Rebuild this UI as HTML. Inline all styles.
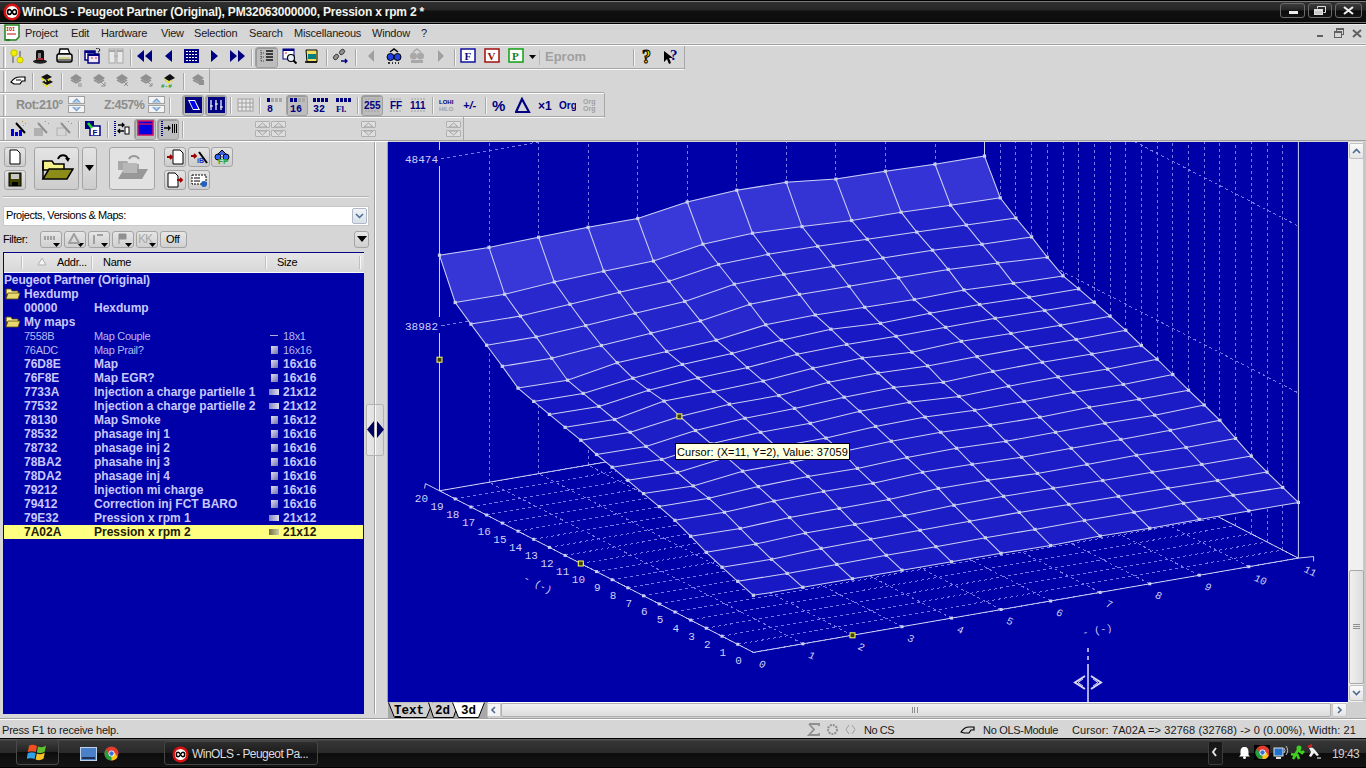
<!DOCTYPE html><html><head><meta charset="utf-8"><style>
*{margin:0;padding:0;box-sizing:border-box}
body{width:1366px;height:768px;overflow:hidden;position:relative;background:#d4d4d4;font-family:"Liberation Sans",sans-serif;font-size:11px;color:#000}
.a{position:absolute}
.t{position:absolute;white-space:nowrap;line-height:1}
.sep{position:absolute;width:2px;border-left:1px solid #a0a0a0;border-right:1px solid #fff}
.hsep{position:absolute;height:2px;border-top:1px solid #a0a0a0;border-bottom:1px solid #fff}
.btn{position:absolute;border:1px solid #a8a8a8;border-radius:2px;background:#dcdcdc}
.sel{position:absolute;border:1px solid #9a9a9a;border-radius:3px;background:#b8b8b8}
</style></head><body>
<div class="a" style="left:0;top:0;width:1366px;height:25px;background:linear-gradient(#000 0,#000 1px,#7a7a7a 1px,#7a7a7a 2px,#303030 2px,#262626 10px,#101010 11px,#0c0c0c 22px,#707070 22px,#707070 23px,#000 23px,#000 24px,#ececec 24px)"></div>
<svg class="a" style="left:3px;top:3px" width="18" height="18" viewBox="0 0 18 18"><circle cx="9" cy="9" r="8.5" fill="#d81010"/><circle cx="9" cy="9" r="6" fill="#fff"/><path d="M4.5 9c0-1.6 1-2.4 2-2.4s1.6.8 2.5 2.4 1.5 2.4 2.5 2.4 2-.8 2-2.4-1-2.4-2-2.4-1.6.8-2.5 2.4-1.5 2.4-2.5 2.4-2-.8-2-2.4z" fill="none" stroke="#000" stroke-width="1.6"/></svg>
<div class="t" style="left:22px;top:6px;font-size:12px;font-weight:bold;color:#f4f4ee;letter-spacing:-0.2px">WinOLS - Peugeot Partner (Original), PM32063000000, Pression x rpm 2 *</div>
<div class="a" style="left:1280px;top:3px;width:25px;height:15px;border:1px solid #6a6a6a;border-radius:3px;background:linear-gradient(#3c3c3c,#262626 45%,#0a0a0a 55%,#141414)"></div>
<div class="a" style="left:1308px;top:3px;width:24px;height:15px;border:1px solid #6a6a6a;border-radius:3px;background:linear-gradient(#3c3c3c,#262626 45%,#0a0a0a 55%,#141414)"></div>
<div class="a" style="left:1335px;top:3px;width:27px;height:15px;border:1px solid #6a6a6a;border-radius:3px;background:linear-gradient(#3c3c3c,#262626 45%,#0a0a0a 55%,#141414)"></div>
<div class="a" style="left:1289px;top:11px;width:9px;height:3px;background:#eee"></div>
<svg class="a" style="left:1314px;top:6px" width="12" height="9" viewBox="0 0 12 9" ><path d="M3.5 2.5V0.5h8v6h-2" fill="none" stroke="#e0e0e0"/><rect x="0" y="3" width="9" height="6" fill="#e0e0e0"/><rect x="1" y="5" width="7" height="3" fill="#c8c8c8"/></svg>
<svg class="a" style="left:1343px;top:6px" width="11" height="9"><path d="M1 1l9 7M10 1l-9 7" stroke="#eee" stroke-width="2.2"/></svg>
<div class="a" style="left:0;top:25px;width:1366px;height:20px;background:#d6d6d6;border-bottom:1px solid #a0a0a0"></div><div class="a" style="left:0;top:43px;width:1366px;height:1px;background:#e6e6e6"></div>
<div class="a" style="left:0;top:45px;width:1366px;height:1px;background:#fff"></div>
<svg class="a" style="left:3px;top:24px" width="18" height="18" viewBox="0 0 18 18"><path d="M2 1h14v12l-3 3H2z" fill="#fff" stroke="#208020" stroke-width="1.5"/><text x="3" y="7" font-size="5" font-family="Liberation Mono" font-weight="bold" fill="#c01010">IOI</text><path d="M4 10h9" stroke="#c01010"/><path d="M3 16h4" stroke="#208020" stroke-width="2"/></svg>
<div class="t" style="left:25px;top:28px;font-size:11px;letter-spacing:-0.2px;color:#1a1a1a">Project</div>
<div class="t" style="left:71px;top:28px;font-size:11px;letter-spacing:-0.2px;color:#1a1a1a">Edit</div>
<div class="t" style="left:101px;top:28px;font-size:11px;letter-spacing:-0.2px;color:#1a1a1a">Hardware</div>
<div class="t" style="left:161px;top:28px;font-size:11px;letter-spacing:-0.2px;color:#1a1a1a">View</div>
<div class="t" style="left:194px;top:28px;font-size:11px;letter-spacing:-0.2px;color:#1a1a1a">Selection</div>
<div class="t" style="left:249px;top:28px;font-size:11px;letter-spacing:-0.2px;color:#1a1a1a">Search</div>
<div class="t" style="left:294px;top:28px;font-size:11px;letter-spacing:-0.2px;color:#1a1a1a">Miscellaneous</div>
<div class="t" style="left:372px;top:28px;font-size:11px;letter-spacing:-0.2px;color:#1a1a1a">Window</div>
<div class="t" style="left:421px;top:28px;font-size:11px;letter-spacing:-0.2px;color:#1a1a1a">?</div>
<div class="a" style="left:1317px;top:35px;width:6px;height:2px;background:#606060"></div>
<div class="a" style="left:1336px;top:28px;width:8px;height:7px;border:1px solid #606060;border-top-width:2px"></div><div class="a" style="left:1334px;top:31px;width:8px;height:7px;border:1px solid #606060;border-top-width:2px;background:#d6d6d6"></div>
<svg class="a" style="left:1352px;top:29px" width="10" height="9"><path d="M1 1l8 7M9 1l-8 7" stroke="#606060" stroke-width="2"/></svg>
<div class="a" style="left:0;top:46px;width:1366px;height:95px;background:#d6d6d6"></div>
<div class="a" style="left:0;top:68px;width:684px;height:1px;background:#a8a8a8"></div><div class="a" style="left:0;top:69px;width:684px;height:1px;background:#fafafa"></div>
<div class="a" style="left:0;top:92px;width:604px;height:1px;background:#a8a8a8"></div><div class="a" style="left:0;top:93px;width:604px;height:1px;background:#fafafa"></div>
<div class="a" style="left:0;top:116px;width:604px;height:1px;background:#a8a8a8"></div><div class="a" style="left:0;top:117px;width:604px;height:1px;background:#fafafa"></div>
<div class="a" style="left:684px;top:46px;width:1px;height:23px;background:#a8a8a8"></div>
<div class="a" style="left:209px;top:69px;width:1px;height:24px;background:#a8a8a8"></div>
<div class="a" style="left:604px;top:93px;width:1px;height:24px;background:#a8a8a8"></div>
<div class="a" style="left:463px;top:117px;width:1px;height:23px;background:#a8a8a8"></div>
<div class="a" style="left:0;top:140px;width:1366px;height:1px;background:#a0a0a0"></div><div class="a" style="left:0;top:141px;width:388px;height:1px;background:#fff"></div>
<div class="a" style="left:3px;top:47px;width:1px;height:21px;background:#a8a8a8"></div><div class="a" style="left:5px;top:47px;width:1px;height:21px;background:#fff"></div>
<div class="a" style="left:3px;top:71px;width:1px;height:21px;background:#a8a8a8"></div><div class="a" style="left:5px;top:71px;width:1px;height:21px;background:#fff"></div>
<div class="a" style="left:3px;top:95px;width:1px;height:21px;background:#a8a8a8"></div><div class="a" style="left:5px;top:95px;width:1px;height:21px;background:#fff"></div>
<div class="a" style="left:3px;top:119px;width:1px;height:21px;background:#a8a8a8"></div><div class="a" style="left:5px;top:119px;width:1px;height:21px;background:#fff"></div>
<svg class="a" style="left:9px;top:48px" width="17" height="16" viewBox="0 0 17 16" ><path d="M4 2v13" stroke="#909090" stroke-width="2"/><path d="M11 3v10" stroke="#909090" stroke-width="2"/><circle cx="5" cy="5" r="3.2" fill="#f0f000" stroke="#c0c000"/><circle cx="11" cy="12" r="3" fill="#f0f000" stroke="#c0c000"/></svg>
<svg class="a" style="left:32px;top:48px" width="17" height="16" viewBox="0 0 17 16" ><ellipse cx="8" cy="13.5" rx="7" ry="2.2" fill="#202020"/><rect x="4" y="2" width="8" height="11" rx="2" fill="#101010"/><rect x="6" y="5" width="3" height="5" fill="#808080"/><path d="M5 11h6" stroke="#e03040" stroke-width="1.5"/></svg>
<svg class="a" style="left:56px;top:48px" width="17" height="16" viewBox="0 0 17 16" ><path d="M4 1h8l2 5H3z" fill="#fff" stroke="#000" stroke-width="1.3"/><rect x="1" y="6" width="15" height="8" rx="2" fill="#e8e8e8" stroke="#000" stroke-width="1.5"/><path d="M3 10h11" stroke="#c8c860" stroke-width="1.5"/><path d="M2 12h13" stroke="#000"/></svg>
<svg class="a" style="left:84px;top:48px" width="17" height="16" viewBox="0 0 17 16" ><rect x="1" y="3" width="10" height="9" fill="#fff" stroke="#000080" stroke-width="1.5"/><rect x="1" y="3" width="10" height="2" fill="#000080"/><rect x="4" y="6" width="11" height="9" fill="#f0e8f8" stroke="#000080" stroke-width="1.5"/><rect x="4" y="6" width="11" height="2" fill="#000080"/><path d="M7 10h2M11 10h2" stroke="#e03030"/><path d="M12 1a2 2 0 1 1 2 3" stroke="#000" fill="none"/></svg>
<svg class="a" style="left:108px;top:48px" width="17" height="16" viewBox="0 0 17 16" ><rect x="1" y="1" width="6" height="14" fill="#e8e8e8" stroke="#a8a8a8"/><rect x="9" y="1" width="6" height="14" fill="#e8e8e8" stroke="#a8a8a8"/><path d="M1 3h6M9 3h6" stroke="#a8a8a8" stroke-width="2"/><path d="M6 8h4" stroke="#a8a8a8"/></svg>
<svg class="a" style="left:137px;top:48px" width="17" height="16" viewBox="0 0 17 16" ><path d="M0 8l7-6v12zM8 8l7-6v12z" fill="#000080"/></svg>
<svg class="a" style="left:161px;top:48px" width="17" height="16" viewBox="0 0 17 16" ><path d="M4 8l7-6v12z" fill="#000080"/></svg>
<svg class="a" style="left:183px;top:48px" width="17" height="16" viewBox="0 0 17 16" ><rect x="1" y="1" width="15" height="14" fill="#000080"/><path d="M3 3.5h11M3 6.5h11M3 9.5h11M3 12.5h11" stroke="#fff" stroke-width="1" stroke-dasharray="2 1"/></svg>
<svg class="a" style="left:206px;top:48px" width="17" height="16" viewBox="0 0 17 16" ><path d="M12 8l-7-6v12z" fill="#000080"/></svg>
<svg class="a" style="left:229px;top:48px" width="17" height="16" viewBox="0 0 17 16" ><path d="M8 8l-7-6v12zM16 8l-7-6v12z" fill="#000080"/></svg>
<div class="a" style="left:78px;top:49px;width:1px;height:17px;background:#a8a8a8"></div><div class="a" style="left:79px;top:49px;width:1px;height:17px;background:#f4f4f4"></div>
<div class="a" style="left:130px;top:49px;width:1px;height:17px;background:#a8a8a8"></div><div class="a" style="left:131px;top:49px;width:1px;height:17px;background:#f4f4f4"></div>
<div class="a" style="left:251px;top:49px;width:1px;height:17px;background:#a8a8a8"></div><div class="a" style="left:252px;top:49px;width:1px;height:17px;background:#f4f4f4"></div>
<div class="a" style="left:326px;top:49px;width:1px;height:17px;background:#a8a8a8"></div><div class="a" style="left:327px;top:49px;width:1px;height:17px;background:#f4f4f4"></div>
<div class="a" style="left:355px;top:49px;width:1px;height:17px;background:#a8a8a8"></div><div class="a" style="left:356px;top:49px;width:1px;height:17px;background:#f4f4f4"></div>
<div class="a" style="left:454px;top:49px;width:1px;height:17px;background:#a8a8a8"></div><div class="a" style="left:455px;top:49px;width:1px;height:17px;background:#f4f4f4"></div>
<div class="a" style="left:633px;top:49px;width:1px;height:17px;background:#a8a8a8"></div><div class="a" style="left:634px;top:49px;width:1px;height:17px;background:#f4f4f4"></div>
<div class="a" style="left:255px;top:47px;width:23px;height:21px;border:1px solid #a0a0a0;border-radius:3px;background:#bdbdbd;box-shadow:inset 1px 1px 0 #999"></div>
<svg class="a" style="left:258px;top:48px" width="17" height="16" viewBox="0 0 17 16" ><path d="M3 2v11M3 5h3M3 9h3M3 13h3" stroke="#404040" stroke-dasharray="1 1"/><path d="M8 3h7M8 6h7M8 9h7M8 12h7" stroke="#101010" stroke-width="1.5"/></svg>
<svg class="a" style="left:282px;top:48px" width="17" height="16" viewBox="0 0 17 16" ><rect x="1" y="1" width="11" height="10" fill="#fff" stroke="#000080"/><rect x="1" y="1" width="11" height="2" fill="#000080"/><path d="M3 5h2" stroke="#e03030"/><circle cx="9" cy="10" r="3.5" fill="#e8f0ff" stroke="#000" stroke-width="1.2"/><path d="M11.5 12.5l3 3" stroke="#000" stroke-width="2"/></svg>
<svg class="a" style="left:304px;top:48px" width="17" height="16" viewBox="0 0 17 16" ><path d="M2 2h11v12H3z" fill="#f0e060" stroke="#000"/><rect x="4" y="6" width="8" height="5" fill="#008080"/><path d="M1 14h12" stroke="#000" stroke-width="1.5"/></svg>
<svg class="a" style="left:332px;top:48px" width="17" height="16" viewBox="0 0 17 16" ><ellipse cx="4" cy="9" rx="2.2" ry="3" fill="#909090" stroke="#000" stroke-width=".6" transform="rotate(40 4 9)"/><ellipse cx="10" cy="4" rx="2.2" ry="3" fill="#909090" stroke="#000" stroke-width=".6" transform="rotate(40 10 4)"/><path d="M9 13h6M13 11l2 2-2 2" stroke="#000080" fill="none" stroke-width="1.3"/></svg>
<svg class="a" style="left:364px;top:48px" width="17" height="16" viewBox="0 0 17 16" ><path d="M4 8l6-6v12z" fill="#a0a0a0"/></svg>
<svg class="a" style="left:386px;top:48px" width="17" height="16" viewBox="0 0 17 16" ><circle cx="4.5" cy="9" r="3.5" fill="#2040e0" stroke="#000"/><circle cx="11.5" cy="9" r="3.5" fill="#2040e0" stroke="#000"/><path d="M4 4l4-3 4 3" stroke="#000" fill="none" stroke-width="1.5"/><path d="M2 15h2M6 15h1M9 15h1M12 15h1" stroke="#000" stroke-width="1.5"/></svg>
<svg class="a" style="left:409px;top:48px" width="17" height="16" viewBox="0 0 17 16" ><circle cx="4.5" cy="8" r="3.5" fill="#a8a8a8"/><circle cx="11.5" cy="8" r="3.5" fill="#a8a8a8"/><path d="M4 4l4-3 4 3" stroke="#a8a8a8" fill="none" stroke-width="1.5"/><rect x="2" y="12" width="12" height="3" fill="#a8a8a8"/></svg>
<svg class="a" style="left:432px;top:48px" width="17" height="16" viewBox="0 0 17 16" ><path d="M12 8l-6-6v12z" fill="#a0a0a0"/></svg>
<svg class="a" style="left:460px;top:48px" width="17" height="16" viewBox="0 0 17 16" ><rect x="1" y="1" width="14" height="13" fill="#fff" stroke="#1010a0" stroke-width="1.5"/><text x="4.5" y="12" font-size="11" font-weight="bold" font-family="Liberation Serif" fill="#101080">F</text></svg>
<svg class="a" style="left:484px;top:48px" width="17" height="16" viewBox="0 0 17 16" ><rect x="1" y="1" width="14" height="13" fill="#fff" stroke="#a01010" stroke-width="1.5"/><text x="3.5" y="12" font-size="11" font-weight="bold" font-family="Liberation Serif" fill="#901010">V</text></svg>
<svg class="a" style="left:508px;top:48px" width="17" height="16" viewBox="0 0 17 16" ><rect x="1" y="1" width="14" height="13" fill="#fff" stroke="#10a010" stroke-width="1.5"/><text x="4" y="12" font-size="11" font-weight="bold" font-family="Liberation Serif" fill="#108010">P</text></svg>
<svg class="a" style="left:640px;top:48px" width="17" height="16" viewBox="0 0 17 16" ><text x="2" y="15" font-size="18" font-weight="bold" font-family="Liberation Serif" fill="#f8e800" stroke="#000" stroke-width="1">?</text></svg>
<svg class="a" style="left:663px;top:48px" width="17" height="16" viewBox="0 0 17 16" ><path d="M1 3v11l3-3 2 5 2-1-2-5h4z" fill="#000"/><text x="7" y="12" font-size="15" font-weight="bold" font-family="Liberation Serif" fill="#000080">?</text></svg>
<svg class="a" style="left:529px;top:55px" width="7" height="4"><path d="M0 0h7L3.5 4z" fill="#000"/></svg>
<div class="t" style="left:545px;top:50px;font-size:13px;font-weight:bold;color:#a0a0a0">Eprom</div>
<div class="a" style="left:539px;top:50px;width:1px;height:15px;background:#b8b8b8"></div>
<svg class="a" style="left:10px;top:72px" width="17" height="16" viewBox="0 0 17 16" ><path d="M1 10c2-3 5-5 9-5h5v4h-3l-2 3H4z" fill="#fff" stroke="#000" stroke-width="1.2"/><path d="M6 8h5" stroke="#000"/></svg>
<svg class="a" style="left:39px;top:72px" width="17" height="16" viewBox="0 0 17 16" ><path d="M2 5l6-3 5 3-6 3z" fill="#101010"/><path d="M3 10l6-3 5 3-6 3z" fill="#101010"/><path d="M3 6l1 2M6 8l1 2M9 7l1 2M4 11l1 3M7 13l1 2M10 12l1 2" stroke="#e8e000" stroke-width="1.5"/></svg>
<svg class="a" style="left:68px;top:72px" width="17" height="16" viewBox="0 0 17 16" ><path d="M2 6l6-4 6 4-6 4z" fill="#909090"/><path d="M3 8l5 3 5-3" stroke="#909090" fill="none" stroke-width="1.5"/><path d="M10 12h4M10 14h4" stroke="#909090"/></svg>
<svg class="a" style="left:91px;top:72px" width="17" height="16" viewBox="0 0 17 16" ><path d="M2 6l6-4 6 4-6 4z" fill="#909090"/><path d="M3 8l5 3 5-3" stroke="#909090" fill="none" stroke-width="1.5"/><path d="M9 9l5 5M14 10v4h-4" stroke="#909090" fill="none"/></svg>
<svg class="a" style="left:114px;top:72px" width="17" height="16" viewBox="0 0 17 16" ><path d="M2 6l6-4 6 4-6 4z" fill="#909090"/><path d="M3 8l5 3 5-3" stroke="#909090" fill="none" stroke-width="1.5"/><path d="M10 10l4 4M14 10l-4 4" stroke="#909090"/></svg>
<svg class="a" style="left:138px;top:72px" width="17" height="16" viewBox="0 0 17 16" ><path d="M2 6l6-4 6 4-6 4z" fill="#909090"/><path d="M3 8l5 3 5-3" stroke="#909090" fill="none" stroke-width="1.5"/><path d="M9 9l5 5M14 11v3h-3" stroke="#909090" fill="none"/></svg>
<svg class="a" style="left:161px;top:72px" width="17" height="16" viewBox="0 0 17 16" ><path d="M3 6l6-4 5 4-6 3z" fill="#101010"/><path d="M4 7l1 3M7 9l1 2M10 8l1 2" stroke="#e8e000" stroke-width="1.5"/><text x="0" y="16" font-size="6" font-weight="bold" font-family="Liberation Mono" fill="#10a010">#-#</text></svg>
<svg class="a" style="left:190px;top:72px" width="17" height="16" viewBox="0 0 17 16" ><path d="M2 6l6-4 6 4-6 4z" fill="#909090"/><path d="M3 8l5 3 5-3" stroke="#909090" fill="none" stroke-width="1.5"/><rect x="9" y="8" width="5" height="5" fill="#909090"/></svg>
<div class="a" style="left:32px;top:73px;width:1px;height:17px;background:#a8a8a8"></div><div class="a" style="left:33px;top:73px;width:1px;height:17px;background:#f4f4f4"></div>
<div class="a" style="left:61px;top:73px;width:1px;height:17px;background:#a8a8a8"></div><div class="a" style="left:62px;top:73px;width:1px;height:17px;background:#f4f4f4"></div>
<div class="a" style="left:183px;top:73px;width:1px;height:17px;background:#a8a8a8"></div><div class="a" style="left:184px;top:73px;width:1px;height:17px;background:#f4f4f4"></div>
<div class="t" style="left:16px;top:99px;font-size:12.5px;font-weight:bold;color:#8c8c8c;letter-spacing:-0.5px">Rot:210°</div>
<div class="t" style="left:104px;top:99px;font-size:12.5px;font-weight:bold;color:#8c8c8c;letter-spacing:-0.6px">Z:457%</div>
<div class="a" style="left:68px;top:96px;width:17px;height:8px;border:1px solid #a0a0a0;background:#f4f4f4"></div>
<div class="a" style="left:68px;top:105px;width:17px;height:8px;border:1px solid #a0a0a0;background:#f4f4f4"></div>
<svg class="a" style="left:72px;top:98px" width="9" height="5" viewBox="0 0 9 5" ><path d="M0 4.5L4.5 0 9 4.5z" fill="#7aa4d0"/><path d="M2 4.5L4.5 2 7 4.5z" fill="#b8d4f0"/></svg>
<svg class="a" style="left:72px;top:107px" width="9" height="5" viewBox="0 0 9 5" ><path d="M0 0L4.5 4.5 9 0z" fill="#7aa4d0"/><path d="M2 0L4.5 2.5 7 0z" fill="#b8d4f0"/></svg>
<div class="a" style="left:148px;top:96px;width:17px;height:8px;border:1px solid #a0a0a0;background:#f4f4f4"></div>
<div class="a" style="left:148px;top:105px;width:17px;height:8px;border:1px solid #a0a0a0;background:#f4f4f4"></div>
<svg class="a" style="left:152px;top:98px" width="9" height="5" viewBox="0 0 9 5" ><path d="M0 4.5L4.5 0 9 4.5z" fill="#7aa4d0"/><path d="M2 4.5L4.5 2 7 4.5z" fill="#b8d4f0"/></svg>
<svg class="a" style="left:152px;top:107px" width="9" height="5" viewBox="0 0 9 5" ><path d="M0 0L4.5 4.5 9 0z" fill="#7aa4d0"/><path d="M2 0L4.5 2.5 7 0z" fill="#b8d4f0"/></svg>
<div class="a" style="left:169px;top:97px;width:1px;height:17px;background:#a8a8a8"></div><div class="a" style="left:170px;top:97px;width:1px;height:17px;background:#f4f4f4"></div>
<div class="a" style="left:182px;top:95px;width:22px;height:21px;border:1px solid #a0a0a0;border-radius:3px;background:#bdbdbd;box-shadow:inset 1px 1px 0 #999"></div>
<div class="a" style="left:205px;top:95px;width:22px;height:21px;border:1px solid #a0a0a0;border-radius:3px;background:#bdbdbd;box-shadow:inset 1px 1px 0 #999"></div>
<svg class="a" style="left:185px;top:97px" width="17" height="16" viewBox="0 0 17 16" ><rect x="0" y="0" width="17" height="16" fill="#000080"/><path d="M3 3h7l5 10H8z" fill="#fff"/><path d="M4.5 4h5l3.8 8H8.3z" fill="#0000f0"/></svg>
<svg class="a" style="left:208px;top:97px" width="17" height="16" viewBox="0 0 17 16" ><rect x="0" y="0" width="17" height="16" fill="#000080"/><path d="M3 3v10M8 3v10M13 3v10" stroke="#fff" stroke-width="1.2"/><path d="M2 9h3M7 7h3M12 10h3" stroke="#fff"/></svg>
<div class="a" style="left:230px;top:97px;width:1px;height:17px;background:#a8a8a8"></div><div class="a" style="left:231px;top:97px;width:1px;height:17px;background:#f4f4f4"></div>
<svg class="a" style="left:237px;top:97px" width="17" height="16" viewBox="0 0 17 16" ><rect x="1" y="2" width="15" height="12" fill="#e8e8e8" stroke="#a0a0a0"/><path d="M1 6h15M1 10h15M5 2v12M9 2v12M13 2v12" stroke="#a0a0a0"/></svg>
<div class="a" style="left:259px;top:97px;width:1px;height:17px;background:#a8a8a8"></div><div class="a" style="left:260px;top:97px;width:1px;height:17px;background:#f4f4f4"></div>
<svg class="a" style="left:266px;top:97px" width="17" height="16" viewBox="0 0 17 16" ><rect x="1" y="1" width="3" height="4" fill="#000080"/><rect x="5" y="1" width="3" height="4" fill="#a8a8a8"/><rect x="9" y="1" width="3" height="4" fill="#a8a8a8"/><rect x="13" y="1" width="3" height="4" fill="#a8a8a8"/><text x="1" y="15" font-size="10" font-weight="bold" font-family="Liberation Mono" fill="#000080">8</text></svg>
<div class="a" style="left:286px;top:95px;width:22px;height:21px;border:1px solid #a0a0a0;border-radius:3px;background:#bdbdbd;box-shadow:inset 1px 1px 0 #999"></div>
<svg class="a" style="left:289px;top:97px" width="17" height="16" viewBox="0 0 17 16" ><rect x="1" y="1" width="3" height="4" fill="#000080"/><rect x="5" y="1" width="3" height="4" fill="#000080"/><rect x="9" y="1" width="3" height="4" fill="#a8a8a8"/><rect x="13" y="1" width="3" height="4" fill="#a8a8a8"/><text x="1" y="15" font-size="10" font-weight="bold" font-family="Liberation Mono" fill="#000080">16</text></svg>
<svg class="a" style="left:312px;top:97px" width="17" height="16" viewBox="0 0 17 16" ><rect x="1" y="1" width="15" height="4" fill="#000080"/><path d="M4.5 1v4M8.5 1v4M12.5 1v4" stroke="#d4d4d4"/><text x="1" y="15" font-size="10" font-weight="bold" font-family="Liberation Mono" fill="#000080">32</text></svg>
<svg class="a" style="left:335px;top:97px" width="17" height="16" viewBox="0 0 17 16" ><rect x="1" y="1" width="15" height="4" fill="#000080"/><path d="M4.5 1v4M8.5 1v4M12.5 1v4" stroke="#d4d4d4"/><text x="1" y="15" font-size="9" font-weight="bold" font-family="Liberation Serif" fill="#000080">Fl.</text></svg>
<div class="a" style="left:357px;top:97px;width:1px;height:17px;background:#a8a8a8"></div><div class="a" style="left:358px;top:97px;width:1px;height:17px;background:#f4f4f4"></div>
<div class="a" style="left:361px;top:95px;width:22px;height:21px;border:1px solid #a0a0a0;border-radius:3px;background:#bdbdbd;box-shadow:inset 1px 1px 0 #999"></div>
<svg class="a" style="left:364px;top:97px" width="17" height="16" viewBox="0 0 17 16" ><text x="0" y="12" font-size="10" font-weight="bold" font-family="Liberation Sans" fill="#000080">255</text><path d="M1 2h14M1 14h14" stroke="#a0a0a0" stroke-dasharray="2 1"/></svg>
<svg class="a" style="left:389px;top:97px" width="17" height="16" viewBox="0 0 17 16" ><text x="1" y="12" font-size="10" font-weight="bold" font-family="Liberation Sans" fill="#000080">FF</text><path d="M1 2h11M1 14h11" stroke="#a0a0a0" stroke-dasharray="2 1"/></svg>
<svg class="a" style="left:410px;top:97px" width="17" height="16" viewBox="0 0 17 16" ><text x="0" y="12" font-size="10" font-weight="bold" font-family="Liberation Sans" fill="#000080">111</text><path d="M1 2h14M1 14h14" stroke="#a0a0a0" stroke-dasharray="2 1"/></svg>
<div class="a" style="left:432px;top:97px;width:1px;height:17px;background:#a8a8a8"></div><div class="a" style="left:433px;top:97px;width:1px;height:17px;background:#f4f4f4"></div>
<svg class="a" style="left:439px;top:97px" width="17" height="16" viewBox="0 0 17 16" ><text x="0" y="7" font-size="6" font-weight="bold" font-family="Liberation Sans" fill="#000080">LOHI</text><text x="0" y="14" font-size="6" font-weight="bold" font-family="Liberation Sans" fill="#a0a0a0">HILO</text></svg>
<svg class="a" style="left:463px;top:97px" width="17" height="16" viewBox="0 0 17 16" ><text x="0" y="12" font-size="11" font-weight="bold" font-style="italic" font-family="Liberation Sans" fill="#000080">+/-</text></svg>
<div class="a" style="left:485px;top:97px;width:1px;height:17px;background:#a8a8a8"></div><div class="a" style="left:486px;top:97px;width:1px;height:17px;background:#f4f4f4"></div>
<svg class="a" style="left:491px;top:97px" width="17" height="16" viewBox="0 0 17 16" ><text x="1" y="14" font-size="15" font-weight="bold" font-family="Liberation Sans" fill="#000080">%</text></svg>
<svg class="a" style="left:515px;top:97px" width="17" height="16" viewBox="0 0 17 16" ><path d="M7 2L1 15h13z" fill="none" stroke="#000080" stroke-width="2.2"/></svg>
<svg class="a" style="left:538px;top:97px" width="17" height="16" viewBox="0 0 17 16" ><text x="0" y="13" font-size="12" font-weight="bold" font-family="Liberation Sans" fill="#000080">×1</text></svg>
<svg class="a" style="left:559px;top:97px" width="17" height="16" viewBox="0 0 17 16" ><text x="0" y="12" font-size="10" font-weight="bold" font-family="Liberation Sans" fill="#000080">Org</text></svg>
<svg class="a" style="left:583px;top:97px" width="17" height="16" viewBox="0 0 17 16" ><text x="0" y="7" font-size="7" font-weight="bold" font-family="Liberation Sans" fill="#a0a0a0">Org</text><text x="0" y="14" font-size="7" font-weight="bold" font-family="Liberation Sans" fill="#a0a0a0">Org</text></svg>
<svg class="a" style="left:10px;top:120px" width="17" height="16" viewBox="0 0 17 16" ><rect x="1" y="9" width="3" height="7" fill="#0000e0"/><rect x="5" y="12" width="3" height="4" fill="#0000e0"/><rect x="9" y="10" width="3" height="6" fill="#0000e0"/><path d="M6 3l9 10" stroke="#000" stroke-width="2"/><path d="M12 1l1 1M15 3l1 1M13 5l1 1" stroke="#c0a000"/></svg>
<svg class="a" style="left:33px;top:120px" width="17" height="16" viewBox="0 0 17 16" ><rect x="1" y="8" width="9" height="8" fill="#b0b0b0"/><path d="M5 3l9 10" stroke="#909090" stroke-width="2"/><path d="M12 1l1 1M15 3l1 1" stroke="#909090"/></svg>
<svg class="a" style="left:56px;top:120px" width="17" height="16" viewBox="0 0 17 16" ><rect x="1" y="8" width="9" height="8" fill="none" stroke="#b0b0b0"/><path d="M5 3l9 10" stroke="#909090" stroke-width="2"/><path d="M12 1l1 1M15 3l1 1" stroke="#909090"/></svg>
<div class="a" style="left:78px;top:121px;width:1px;height:17px;background:#a8a8a8"></div><div class="a" style="left:79px;top:121px;width:1px;height:17px;background:#f4f4f4"></div>
<svg class="a" style="left:84px;top:120px" width="17" height="16" viewBox="0 0 17 16" ><rect x="1" y="1" width="9" height="8" fill="#000080"/><rect x="6" y="6" width="10" height="10" fill="#fff" stroke="#000080" stroke-width="1.5"/><text x="8.5" y="15" font-size="8" font-weight="bold" fill="#000080">F</text><path d="M4 3l4 5" stroke="#20e020" stroke-width="2.5"/></svg>
<div class="a" style="left:107px;top:121px;width:1px;height:17px;background:#a8a8a8"></div><div class="a" style="left:108px;top:121px;width:1px;height:17px;background:#f4f4f4"></div>
<svg class="a" style="left:113px;top:120px" width="17" height="16" viewBox="0 0 17 16" ><path d="M2 1v15" stroke="#000080" stroke-dasharray="1 1" stroke-width="2"/><path d="M5 5h6M9 3l2 2-2 2M5 11h6M7 9l-2 2 2 2" stroke="#000" fill="none" stroke-width="1.3"/><rect x="12" y="7" width="4" height="7" fill="#fff" stroke="#000"/></svg>
<div class="a" style="left:134px;top:119px;width:22px;height:21px;border:1px solid #a0a0a0;border-radius:3px;background:#bdbdbd;box-shadow:inset 1px 1px 0 #999"></div>
<div class="a" style="left:157px;top:119px;width:22px;height:21px;border:1px solid #a0a0a0;border-radius:3px;background:#bdbdbd;box-shadow:inset 1px 1px 0 #999"></div>
<svg class="a" style="left:137px;top:120px" width="17" height="16" viewBox="0 0 17 16" ><rect x="1" y="1" width="15" height="14" fill="#0000e0" stroke="#d01060" stroke-width="1.5"/><path d="M1 4h15" stroke="#d01060" stroke-width="1.5"/></svg>
<svg class="a" style="left:160px;top:120px" width="17" height="16" viewBox="0 0 17 16" ><path d="M2 1v15" stroke="#000080" stroke-dasharray="1 1" stroke-width="2"/><path d="M4 8h5" stroke="#000" stroke-width="1.5"/><path d="M8 5l3 3-3 3z" fill="#000"/><path d="M12.5 4v9M14.5 4v9M16.5 4v9" stroke="#000"/></svg>
<div class="a" style="left:182px;top:121px;width:1px;height:17px;background:#a8a8a8"></div><div class="a" style="left:183px;top:121px;width:1px;height:17px;background:#f4f4f4"></div>
<div class="a" style="left:255px;top:121px;width:15px;height:7px;border:1px solid #b0b0b0;border-radius:1px;background:#dedede"></div>
<div class="a" style="left:255px;top:130px;width:15px;height:7px;border:1px solid #b0b0b0;border-radius:1px;background:#dedede"></div>
<svg class="a" style="left:258px;top:122px" width="9" height="5" viewBox="0 0 9 5" ><path d="M0 5L4.5 1 9 5z" fill="none" stroke="#a0a0a0"/></svg>
<svg class="a" style="left:258px;top:131px" width="9" height="5" viewBox="0 0 9 5" ><path d="M0 0L4.5 4 9 0z" fill="none" stroke="#a0a0a0"/></svg>
<div class="a" style="left:271px;top:121px;width:15px;height:7px;border:1px solid #b0b0b0;border-radius:1px;background:#dedede"></div>
<div class="a" style="left:271px;top:130px;width:15px;height:7px;border:1px solid #b0b0b0;border-radius:1px;background:#dedede"></div>
<svg class="a" style="left:274px;top:122px" width="9" height="5" viewBox="0 0 9 5" ><path d="M0 5L4.5 1 9 5z" fill="none" stroke="#a0a0a0"/></svg>
<svg class="a" style="left:274px;top:131px" width="9" height="5" viewBox="0 0 9 5" ><path d="M0 0L4.5 4 9 0z" fill="none" stroke="#a0a0a0"/></svg>
<div class="a" style="left:361px;top:121px;width:15px;height:7px;border:1px solid #b0b0b0;border-radius:1px;background:#dedede"></div>
<div class="a" style="left:361px;top:130px;width:15px;height:7px;border:1px solid #b0b0b0;border-radius:1px;background:#dedede"></div>
<svg class="a" style="left:364px;top:122px" width="9" height="5" viewBox="0 0 9 5" ><path d="M0 5L4.5 1 9 5z" fill="none" stroke="#a0a0a0"/></svg>
<svg class="a" style="left:364px;top:131px" width="9" height="5" viewBox="0 0 9 5" ><path d="M0 0L4.5 4 9 0z" fill="none" stroke="#a0a0a0"/></svg>
<div class="a" style="left:446px;top:121px;width:15px;height:7px;border:1px solid #b0b0b0;border-radius:1px;background:#dedede"></div>
<div class="a" style="left:446px;top:130px;width:15px;height:7px;border:1px solid #b0b0b0;border-radius:1px;background:#dedede"></div>
<svg class="a" style="left:449px;top:122px" width="9" height="5" viewBox="0 0 9 5" ><path d="M0 5L4.5 1 9 5z" fill="none" stroke="#a0a0a0"/></svg>
<svg class="a" style="left:449px;top:131px" width="9" height="5" viewBox="0 0 9 5" ><path d="M0 0L4.5 4 9 0z" fill="none" stroke="#a0a0a0"/></svg>
<div class="a" style="left:0;top:142px;width:388px;height:576px;background:#d6d6d6"></div>
<div class="a" style="left:4px;top:147px;width:22px;height:20px;border:1px solid #a4a4a4;border-radius:3px;background:linear-gradient(#e4e4e4,#cdcdcd)"></div>
<div class="a" style="left:4px;top:170px;width:22px;height:20px;border:1px solid #a4a4a4;border-radius:3px;background:linear-gradient(#e4e4e4,#cdcdcd)"></div>
<div class="a" style="left:34px;top:147px;width:45px;height:43px;border:1px solid #a4a4a4;border-radius:3px;background:linear-gradient(#e4e4e4,#cdcdcd)"></div>
<div class="a" style="left:82px;top:147px;width:15px;height:43px;border:1px solid #a4a4a4;border-radius:3px;background:linear-gradient(#e4e4e4,#cdcdcd)"></div>
<div class="a" style="left:109px;top:147px;width:46px;height:43px;border:1px solid #a4a4a4;border-radius:3px;background:#e2e2e2"></div>
<div class="a" style="left:164px;top:147px;width:22px;height:20px;border:1px solid #a4a4a4;border-radius:3px;background:linear-gradient(#e4e4e4,#cdcdcd)"></div>
<div class="a" style="left:188px;top:147px;width:22px;height:20px;border:1px solid #a4a4a4;border-radius:3px;background:linear-gradient(#e4e4e4,#cdcdcd)"></div>
<div class="a" style="left:211px;top:147px;width:22px;height:20px;border:1px solid #a4a4a4;border-radius:3px;background:linear-gradient(#e4e4e4,#cdcdcd)"></div>
<div class="a" style="left:164px;top:170px;width:22px;height:20px;border:1px solid #a4a4a4;border-radius:3px;background:linear-gradient(#e4e4e4,#cdcdcd)"></div>
<div class="a" style="left:188px;top:170px;width:22px;height:20px;border:1px solid #a4a4a4;border-radius:3px;background:linear-gradient(#e4e4e4,#cdcdcd)"></div>
<svg class="a" style="left:8px;top:149px" width="14" height="16" viewBox="0 0 14 16" ><path d="M2 1h7l3 3v11H2z" fill="#fff" stroke="#000"/></svg>
<svg class="a" style="left:8px;top:172px" width="14" height="16" viewBox="0 0 14 16" ><rect x="1" y="1" width="12" height="13" fill="#404000" stroke="#000"/><rect x="3" y="2" width="8" height="5" fill="#c8c8c8"/><rect x="4" y="10" width="6" height="4" fill="#000"/></svg>
<svg class="a" style="left:40px;top:153px" width="34" height="32" viewBox="0 0 34 32" ><path d="M3 8h9l2 3h10v6H3z" fill="#f4f08c" stroke="#000" stroke-width="1.5"/><path d="M3 26l6-10h24l-6 10z" fill="#8c8c18" stroke="#000" stroke-width="1.5"/><path d="M3 8v18" stroke="#000" stroke-width="1.5"/><path d="M18 6c2-5 8-5 10 0" fill="none" stroke="#000" stroke-width="2"/><path d="M25 5h5l-2 4z" fill="#000"/></svg>
<svg class="a" style="left:85px;top:165px" width="9" height="6" viewBox="0 0 9 6" ><path d="M0 0h9L4.5 6z" fill="#000"/></svg>
<svg class="a" style="left:115px;top:153px" width="34" height="30" viewBox="0 0 34 30" ><path d="M3 8h9l2 3h10v6H3z" fill="#a8a8a8"/><path d="M3 26l6-10h24l-6 10z" fill="#989898"/><rect x="8" y="10" width="14" height="10" fill="#b8b8b8"/><path d="M14 6c2-4 8-4 10 0" fill="none" stroke="#989898" stroke-width="2"/></svg>
<svg class="a" style="left:167px;top:149px" width="17" height="16" viewBox="0 0 17 16" ><path d="M6 1h7l3 3v11H6z" fill="#fff" stroke="#000"/><path d="M0 8h5M3 6l2 2-2 2" stroke="#a00000" stroke-width="1.8" fill="none"/></svg>
<svg class="a" style="left:191px;top:149px" width="17" height="16" viewBox="0 0 17 16" ><path d="M0 7h5M3 5l2 2-2 2" stroke="#a00000" stroke-width="1.8" fill="none"/><path d="M8 3l8 11" stroke="#000" stroke-width="2"/><text x="6" y="14" font-size="7" fill="#2030c0" font-weight="bold">iB</text></svg>
<svg class="a" style="left:214px;top:149px" width="17" height="16" viewBox="0 0 17 16" ><path d="M3 6l5-5 5 5" fill="#4060e0" stroke="#000"/><circle cx="4" cy="8" r="3" fill="#3060ff" stroke="#000"/><circle cx="12" cy="8" r="3" fill="#3060ff" stroke="#000"/><text x="4" y="15" font-size="8" font-weight="bold" fill="#20b020">FP</text></svg>
<svg class="a" style="left:167px;top:172px" width="17" height="16" viewBox="0 0 17 16" ><path d="M1 1h7l3 3v11H1z" fill="#fff" stroke="#000"/><path d="M10 8h5M13 6l2 2-2 2" stroke="#a00000" stroke-width="1.8" fill="none"/></svg>
<svg class="a" style="left:191px;top:172px" width="17" height="16" viewBox="0 0 17 16" ><rect x="1" y="3" width="14" height="9" fill="#fff" stroke="#000" stroke-dasharray="2 1"/><path d="M3 6h6M3 9h6" stroke="#000"/><circle cx="13" cy="12" r="3" fill="#2060c0"/></svg>
<div class="a" style="left:3px;top:196px;width:366px;height:1px;background:#b4b4b4"></div><div class="a" style="left:3px;top:197px;width:366px;height:1px;background:#f4f4f4"></div>
<div class="a" style="left:3px;top:206px;width:366px;height:20px;background:#fff;border:1px solid #c8c8c8"></div>
<div class="t" style="left:6px;top:210px;font-size:11px;letter-spacing:-0.45px;color:#000">Projects, Versions &amp; Maps:</div>
<div class="a" style="left:352px;top:208px;width:15px;height:16px;border:1px solid #b0b8c8;border-radius:2px;background:linear-gradient(#f0f4f8,#d8e0e8)"></div>
<svg class="a" style="left:355px;top:213px" width="9" height="6" viewBox="0 0 9 6" ><path d="M1 1l3.5 3.5L8 1" fill="none" stroke="#4a6a90" stroke-width="1.5"/></svg>
<div class="t" style="left:3px;top:234px;font-size:11px;letter-spacing:-0.4px;color:#000">Filter:</div>
<div class="a" style="left:40px;top:231px;width:22px;height:17px;border:1px solid #a4a4a4;border-radius:3px;background:linear-gradient(#e6e6e6,#d0d0d0)"></div>
<svg class="a" style="left:53px;top:243px" width="7" height="4" viewBox="0 0 7 4" ><path d="M0 0h7L3.5 4z" fill="#000"/></svg>
<div class="a" style="left:64px;top:231px;width:22px;height:17px;border:1px solid #a4a4a4;border-radius:3px;background:linear-gradient(#e6e6e6,#d0d0d0)"></div>
<svg class="a" style="left:77px;top:243px" width="7" height="4" viewBox="0 0 7 4" ><path d="M0 0h7L3.5 4z" fill="#000"/></svg>
<div class="a" style="left:88px;top:231px;width:22px;height:17px;border:1px solid #a4a4a4;border-radius:3px;background:linear-gradient(#e6e6e6,#d0d0d0)"></div>
<svg class="a" style="left:101px;top:243px" width="7" height="4" viewBox="0 0 7 4" ><path d="M0 0h7L3.5 4z" fill="#000"/></svg>
<div class="a" style="left:112px;top:231px;width:22px;height:17px;border:1px solid #a4a4a4;border-radius:3px;background:linear-gradient(#e6e6e6,#d0d0d0)"></div>
<svg class="a" style="left:125px;top:243px" width="7" height="4" viewBox="0 0 7 4" ><path d="M0 0h7L3.5 4z" fill="#000"/></svg>
<div class="a" style="left:136px;top:231px;width:22px;height:17px;border:1px solid #a4a4a4;border-radius:3px;background:linear-gradient(#e6e6e6,#d0d0d0)"></div>
<svg class="a" style="left:149px;top:243px" width="7" height="4" viewBox="0 0 7 4" ><path d="M0 0h7L3.5 4z" fill="#000"/></svg>
<svg class="a" style="left:44px;top:234px" width="12" height="8" viewBox="0 0 12 8" ><path d="M0 4h11" stroke="#a0a0a0" stroke-width="4" stroke-dasharray="2 1"/></svg>
<svg class="a" style="left:68px;top:233px" width="12" height="11" viewBox="0 0 12 11" ><path d="M6 1L1 10h10z" fill="none" stroke="#a0a0a0" stroke-width="2"/></svg>
<svg class="a" style="left:92px;top:233px" width="12" height="11" viewBox="0 0 12 11" ><path d="M2 2v9M5 2h6" stroke="#a0a0a0" stroke-width="2"/></svg>
<svg class="a" style="left:116px;top:233px" width="12" height="11" viewBox="0 0 12 11" ><path d="M3 1v10M3 1h7v5H3" fill="#909090" stroke="#909090"/></svg>
<div class="t" style="left:138px;top:233px;font-size:12px;color:#a8a8a8;letter-spacing:-1px">KK</div>
<div class="a" style="left:160px;top:231px;width:27px;height:17px;border:1px solid #a4a4a4;border-radius:3px;background:linear-gradient(#e6e6e6,#d0d0d0)"></div>
<div class="t" style="left:166px;top:234px;font-size:11px;color:#000;letter-spacing:-0.3px">Off</div>
<div class="a" style="left:354px;top:231px;width:15px;height:17px;border:1px solid #a4a4a4;border-radius:3px;background:linear-gradient(#e6e6e6,#d0d0d0)"></div>
<svg class="a" style="left:357px;top:236px" width="10" height="6" viewBox="0 0 10 6" ><path d="M0 0h10L5 6z" fill="#000"/></svg>
<div class="a" style="left:374px;top:142px;width:1px;height:576px;background:#a0a0a0"></div><div class="a" style="left:375px;top:142px;width:1px;height:576px;background:#fff"></div>
<div class="a" style="left:387px;top:142px;width:1px;height:560px;background:#a0a0a0"></div>
<div class="a" style="left:366px;top:404px;width:18px;height:52px;border:1px solid #b4b4b4;border-radius:2px;background:linear-gradient(90deg,#e8e8e8,#d8d8d8)"></div>
<div class="a" style="left:374px;top:405px;width:1px;height:50px;background:#b0b0b0"></div><div class="a" style="left:375px;top:405px;width:1px;height:50px;background:#fff"></div>
<svg class="a" style="left:367px;top:421px" width="17" height="17" viewBox="0 0 17 17" ><path d="M7 0v17L0 8.5zM10 0v17l7-8.5z" fill="#000060"/></svg>
<div class="a" style="left:3px;top:252px;width:361px;height:462px;background:#0000a8;border-top:1px solid #000080"></div>
<div class="a" style="left:4px;top:253px;width:360px;height:19px;background:linear-gradient(#e6e6e6,#d8d8d8)"></div><div class="a" style="left:4px;top:272px;width:360px;height:1px;background:#f8f8ff"></div>
<div class="a" style="left:21px;top:256px;width:1px;height:13px;background:#c0c0c0"></div><div class="a" style="left:22px;top:256px;width:1px;height:13px;background:#f8f8f8"></div>
<div class="a" style="left:91px;top:256px;width:1px;height:13px;background:#c0c0c0"></div><div class="a" style="left:92px;top:256px;width:1px;height:13px;background:#f8f8f8"></div>
<div class="a" style="left:265px;top:256px;width:1px;height:13px;background:#c0c0c0"></div><div class="a" style="left:266px;top:256px;width:1px;height:13px;background:#f8f8f8"></div>
<div class="a" style="left:359px;top:256px;width:1px;height:13px;background:#c0c0c0"></div><div class="a" style="left:360px;top:256px;width:1px;height:13px;background:#f8f8f8"></div>
<svg class="a" style="left:37px;top:257px" width="10" height="9" viewBox="0 0 10 9" ><path d="M5 1L1 8h8z" fill="#f4f4f4" stroke="#b0b0b0"/></svg>
<div class="t" style="left:57px;top:257px;font-size:11px;letter-spacing:-0.3px">Addr...</div>
<div class="t" style="left:103px;top:257px;font-size:11px;letter-spacing:-0.3px">Name</div>
<div class="t" style="left:277px;top:257px;font-size:11px;letter-spacing:-0.3px">Size</div>
<div class="t" style="left:4px;top:273.5px;font-size:12px;font-weight:bold;color:#c8c8ff;letter-spacing:-0.13px">Peugeot Partner (Original)</div>
<svg class="a" style="left:5px;top:287px" width="16" height="13" viewBox="0 0 16 13" ><path d="M1 2h5l1 2h6v3H1z" fill="#f8f0a0" stroke="#605000" stroke-width=".8"/><path d="M1 12l2-6h12l-2 6z" fill="#e8d870" stroke="#605000" stroke-width=".8"/><path d="M1 2v10" stroke="#605000"/></svg>
<div class="t" style="left:24px;top:287.5px;font-size:12px;font-weight:bold;color:#c8c8ff">Hexdump</div>
<div class="t" style="left:24px;top:301.5px;font-size:12px;font-weight:bold;color:#c8c8ff">00000</div>
<div class="t" style="left:94px;top:301.5px;font-size:12px;font-weight:bold;color:#c8c8ff">Hexdump</div>
<svg class="a" style="left:5px;top:315px" width="16" height="13" viewBox="0 0 16 13" ><path d="M1 2h5l1 2h6v3H1z" fill="#f8f0a0" stroke="#605000" stroke-width=".8"/><path d="M1 12l2-6h12l-2 6z" fill="#e8d870" stroke="#605000" stroke-width=".8"/><path d="M1 2v10" stroke="#605000"/></svg>
<div class="t" style="left:24px;top:315.5px;font-size:12px;font-weight:bold;color:#c8c8ff">My maps</div>
<div class="t" style="left:24px;top:330.5px;font-size:11px;color:#b8b8f0;letter-spacing:-0.3px">7558B</div>
<div class="t" style="left:94px;top:330.5px;font-size:11px;color:#b8b8f0;letter-spacing:-0.3px">Map Couple</div>
<div class="t" style="left:283px;top:330.5px;font-size:11px;color:#b8b8f0;letter-spacing:-0.3px">18x1</div>
<div class="a" style="left:270px;top:335px;width:8px;height:1px;background:#b0b0e0"></div>
<div class="t" style="left:24px;top:344.5px;font-size:11px;color:#b8b8f0;letter-spacing:-0.3px">76ADC</div>
<div class="t" style="left:94px;top:344.5px;font-size:11px;color:#b8b8f0;letter-spacing:-0.3px">Map Prail?</div>
<div class="t" style="left:283px;top:344.5px;font-size:11px;color:#b8b8f0;letter-spacing:-0.3px">16x16</div>
<div class="a" style="left:271px;top:346px;width:7px;height:8px;background:linear-gradient(135deg,#e0e0f0,#7070b0)"></div>
<div class="t" style="left:24px;top:357.5px;font-size:12px;font-weight:bold;color:#c8c8ff">76D8E</div>
<div class="t" style="left:94px;top:357.5px;font-size:12px;font-weight:bold;color:#c8c8ff">Map</div>
<div class="t" style="left:283px;top:357.5px;font-size:12px;font-weight:bold;color:#c8c8ff">16x16</div>
<div class="a" style="left:271px;top:360px;width:7px;height:8px;background:linear-gradient(135deg,#e0e0f0,#7070b0)"></div>
<div class="t" style="left:24px;top:371.5px;font-size:12px;font-weight:bold;color:#c8c8ff">76F8E</div>
<div class="t" style="left:94px;top:371.5px;font-size:12px;font-weight:bold;color:#c8c8ff">Map EGR?</div>
<div class="t" style="left:283px;top:371.5px;font-size:12px;font-weight:bold;color:#c8c8ff">16x16</div>
<div class="a" style="left:271px;top:374px;width:7px;height:8px;background:linear-gradient(135deg,#e0e0f0,#7070b0)"></div>
<div class="t" style="left:24px;top:385.5px;font-size:12px;font-weight:bold;color:#c8c8ff">7733A</div>
<div class="t" style="left:94px;top:385.5px;font-size:12px;font-weight:bold;color:#c8c8ff">Injection a charge partielle 1</div>
<div class="t" style="left:283px;top:385.5px;font-size:12px;font-weight:bold;color:#c8c8ff">21x12</div>
<div class="a" style="left:269px;top:389px;width:10px;height:6px;background:linear-gradient(90deg,#8080c0,#e0e0f0)"></div>
<div class="t" style="left:24px;top:399.5px;font-size:12px;font-weight:bold;color:#c8c8ff">77532</div>
<div class="t" style="left:94px;top:399.5px;font-size:12px;font-weight:bold;color:#c8c8ff">Injection a charge partielle 2</div>
<div class="t" style="left:283px;top:399.5px;font-size:12px;font-weight:bold;color:#c8c8ff">21x12</div>
<div class="a" style="left:269px;top:403px;width:10px;height:6px;background:linear-gradient(90deg,#8080c0,#e0e0f0)"></div>
<div class="t" style="left:24px;top:413.5px;font-size:12px;font-weight:bold;color:#c8c8ff">78130</div>
<div class="t" style="left:94px;top:413.5px;font-size:12px;font-weight:bold;color:#c8c8ff">Map Smoke</div>
<div class="t" style="left:283px;top:413.5px;font-size:12px;font-weight:bold;color:#c8c8ff">16x12</div>
<div class="a" style="left:271px;top:416px;width:7px;height:8px;background:linear-gradient(135deg,#e0e0f0,#7070b0)"></div>
<div class="t" style="left:24px;top:427.5px;font-size:12px;font-weight:bold;color:#c8c8ff">78532</div>
<div class="t" style="left:94px;top:427.5px;font-size:12px;font-weight:bold;color:#c8c8ff">phasage inj 1</div>
<div class="t" style="left:283px;top:427.5px;font-size:12px;font-weight:bold;color:#c8c8ff">16x16</div>
<div class="a" style="left:271px;top:430px;width:7px;height:8px;background:linear-gradient(135deg,#e0e0f0,#7070b0)"></div>
<div class="t" style="left:24px;top:441.5px;font-size:12px;font-weight:bold;color:#c8c8ff">78732</div>
<div class="t" style="left:94px;top:441.5px;font-size:12px;font-weight:bold;color:#c8c8ff">phasage inj 2</div>
<div class="t" style="left:283px;top:441.5px;font-size:12px;font-weight:bold;color:#c8c8ff">16x16</div>
<div class="a" style="left:271px;top:444px;width:7px;height:8px;background:linear-gradient(135deg,#e0e0f0,#7070b0)"></div>
<div class="t" style="left:24px;top:455.5px;font-size:12px;font-weight:bold;color:#c8c8ff">78BA2</div>
<div class="t" style="left:94px;top:455.5px;font-size:12px;font-weight:bold;color:#c8c8ff">phasahe inj 3</div>
<div class="t" style="left:283px;top:455.5px;font-size:12px;font-weight:bold;color:#c8c8ff">16x16</div>
<div class="a" style="left:271px;top:458px;width:7px;height:8px;background:linear-gradient(135deg,#e0e0f0,#7070b0)"></div>
<div class="t" style="left:24px;top:469.5px;font-size:12px;font-weight:bold;color:#c8c8ff">78DA2</div>
<div class="t" style="left:94px;top:469.5px;font-size:12px;font-weight:bold;color:#c8c8ff">phasage inj 4</div>
<div class="t" style="left:283px;top:469.5px;font-size:12px;font-weight:bold;color:#c8c8ff">16x16</div>
<div class="a" style="left:271px;top:472px;width:7px;height:8px;background:linear-gradient(135deg,#e0e0f0,#7070b0)"></div>
<div class="t" style="left:24px;top:483.5px;font-size:12px;font-weight:bold;color:#c8c8ff">79212</div>
<div class="t" style="left:94px;top:483.5px;font-size:12px;font-weight:bold;color:#c8c8ff">Injection mi charge</div>
<div class="t" style="left:283px;top:483.5px;font-size:12px;font-weight:bold;color:#c8c8ff">16x16</div>
<div class="a" style="left:271px;top:486px;width:7px;height:8px;background:linear-gradient(135deg,#e0e0f0,#7070b0)"></div>
<div class="t" style="left:24px;top:497.5px;font-size:12px;font-weight:bold;color:#c8c8ff">79412</div>
<div class="t" style="left:94px;top:497.5px;font-size:12px;font-weight:bold;color:#c8c8ff">Correction inj FCT BARO</div>
<div class="t" style="left:283px;top:497.5px;font-size:12px;font-weight:bold;color:#c8c8ff">16x16</div>
<div class="a" style="left:271px;top:500px;width:7px;height:8px;background:linear-gradient(135deg,#e0e0f0,#7070b0)"></div>
<div class="t" style="left:24px;top:511.5px;font-size:12px;font-weight:bold;color:#c8c8ff">79E32</div>
<div class="t" style="left:94px;top:511.5px;font-size:12px;font-weight:bold;color:#c8c8ff">Pression x rpm 1</div>
<div class="t" style="left:283px;top:511.5px;font-size:12px;font-weight:bold;color:#c8c8ff">21x12</div>
<div class="a" style="left:269px;top:515px;width:10px;height:6px;background:linear-gradient(90deg,#8080c0,#e0e0f0)"></div>
<div class="a" style="left:4px;top:525px;width:359px;height:14px;background:#ffff80"></div>
<div class="t" style="left:24px;top:525.5px;font-size:12px;font-weight:bold;color:#202000">7A02A</div>
<div class="t" style="left:94px;top:525.5px;font-size:12px;font-weight:bold;color:#202000">Pression x rpm 2</div>
<div class="t" style="left:283px;top:525.5px;font-size:12px;font-weight:bold;color:#202000">21x12</div>
<div class="a" style="left:269px;top:529px;width:10px;height:6px;background:linear-gradient(90deg,#707040,#d0d0a0)"></div>
<div class="a" style="left:388px;top:142px;width:960px;height:560px;background:#0000a8"></div>
<svg class="a" style="left:0;top:0" width="1366" height="768" viewBox="0 0 1366 768">
<defs><clipPath id="cc"><rect x="388" y="142" width="960" height="559"/></clipPath></defs>
<g clip-path="url(#cc)">
<line x1="753.4" y1="652.4" x2="1298.4" y2="558.1" stroke="#7878ec" stroke-dasharray="3 3" stroke-width="1" shape-rendering="crispEdges"/>
<line x1="737.7" y1="644.3" x2="1282.7" y2="550" stroke="#7878ec" stroke-dasharray="3 3" stroke-width="1" shape-rendering="crispEdges"/>
<line x1="722" y1="636.2" x2="1267" y2="541.9" stroke="#7878ec" stroke-dasharray="3 3" stroke-width="1" shape-rendering="crispEdges"/>
<line x1="706.3" y1="628.2" x2="1251.3" y2="533.9" stroke="#7878ec" stroke-dasharray="3 3" stroke-width="1" shape-rendering="crispEdges"/>
<line x1="690.6" y1="620.1" x2="1235.6" y2="525.8" stroke="#7878ec" stroke-dasharray="3 3" stroke-width="1" shape-rendering="crispEdges"/>
<line x1="674.9" y1="612" x2="1219.9" y2="517.7" stroke="#7878ec" stroke-dasharray="3 3" stroke-width="1" shape-rendering="crispEdges"/>
<line x1="659.2" y1="603.9" x2="1204.2" y2="509.6" stroke="#7878ec" stroke-dasharray="3 3" stroke-width="1" shape-rendering="crispEdges"/>
<line x1="643.5" y1="595.8" x2="1188.5" y2="501.5" stroke="#7878ec" stroke-dasharray="3 3" stroke-width="1" shape-rendering="crispEdges"/>
<line x1="627.8" y1="587.8" x2="1172.8" y2="493.5" stroke="#7878ec" stroke-dasharray="3 3" stroke-width="1" shape-rendering="crispEdges"/>
<line x1="612.1" y1="579.7" x2="1157.1" y2="485.4" stroke="#7878ec" stroke-dasharray="3 3" stroke-width="1" shape-rendering="crispEdges"/>
<line x1="596.5" y1="571.6" x2="1141.4" y2="477.3" stroke="#7878ec" stroke-dasharray="3 3" stroke-width="1" shape-rendering="crispEdges"/>
<line x1="580.8" y1="563.5" x2="1125.8" y2="469.2" stroke="#7878ec" stroke-dasharray="3 3" stroke-width="1" shape-rendering="crispEdges"/>
<line x1="565.1" y1="555.4" x2="1110.1" y2="461.1" stroke="#7878ec" stroke-dasharray="3 3" stroke-width="1" shape-rendering="crispEdges"/>
<line x1="549.4" y1="547.4" x2="1094.4" y2="453.1" stroke="#7878ec" stroke-dasharray="3 3" stroke-width="1" shape-rendering="crispEdges"/>
<line x1="533.7" y1="539.3" x2="1078.7" y2="445" stroke="#7878ec" stroke-dasharray="3 3" stroke-width="1" shape-rendering="crispEdges"/>
<line x1="518" y1="531.2" x2="1063" y2="436.9" stroke="#7878ec" stroke-dasharray="3 3" stroke-width="1" shape-rendering="crispEdges"/>
<line x1="502.3" y1="523.1" x2="1047.3" y2="428.8" stroke="#7878ec" stroke-dasharray="3 3" stroke-width="1" shape-rendering="crispEdges"/>
<line x1="486.6" y1="515" x2="1031.6" y2="420.7" stroke="#7878ec" stroke-dasharray="3 3" stroke-width="1" shape-rendering="crispEdges"/>
<line x1="470.9" y1="507" x2="1015.9" y2="412.7" stroke="#7878ec" stroke-dasharray="3 3" stroke-width="1" shape-rendering="crispEdges"/>
<line x1="455.2" y1="498.9" x2="1000.2" y2="404.6" stroke="#7878ec" stroke-dasharray="3 3" stroke-width="1" shape-rendering="crispEdges"/>
<line x1="439.5" y1="490.8" x2="984.5" y2="396.5" stroke="#7878ec" stroke-dasharray="3 3" stroke-width="1" shape-rendering="crispEdges"/>
<line x1="753.4" y1="652.4" x2="439.5" y2="490.8" stroke="#7878ec" stroke-dasharray="3 3" stroke-width="1" shape-rendering="crispEdges"/>
<line x1="802.9" y1="643.8" x2="489" y2="482.2" stroke="#7878ec" stroke-dasharray="3 3" stroke-width="1" shape-rendering="crispEdges"/>
<line x1="852.5" y1="635.3" x2="538.6" y2="473.7" stroke="#7878ec" stroke-dasharray="3 3" stroke-width="1" shape-rendering="crispEdges"/>
<line x1="902" y1="626.7" x2="588.1" y2="465.1" stroke="#7878ec" stroke-dasharray="3 3" stroke-width="1" shape-rendering="crispEdges"/>
<line x1="951.6" y1="618.1" x2="637.7" y2="456.5" stroke="#7878ec" stroke-dasharray="3 3" stroke-width="1" shape-rendering="crispEdges"/>
<line x1="1001.1" y1="609.5" x2="687.2" y2="447.9" stroke="#7878ec" stroke-dasharray="3 3" stroke-width="1" shape-rendering="crispEdges"/>
<line x1="1050.7" y1="601" x2="736.8" y2="439.4" stroke="#7878ec" stroke-dasharray="3 3" stroke-width="1" shape-rendering="crispEdges"/>
<line x1="1100.2" y1="592.4" x2="786.3" y2="430.8" stroke="#7878ec" stroke-dasharray="3 3" stroke-width="1" shape-rendering="crispEdges"/>
<line x1="1149.8" y1="583.8" x2="835.9" y2="422.2" stroke="#7878ec" stroke-dasharray="3 3" stroke-width="1" shape-rendering="crispEdges"/>
<line x1="1199.3" y1="575.2" x2="885.4" y2="413.6" stroke="#7878ec" stroke-dasharray="3 3" stroke-width="1" shape-rendering="crispEdges"/>
<line x1="1248.8" y1="566.7" x2="935" y2="405.1" stroke="#7878ec" stroke-dasharray="3 3" stroke-width="1" shape-rendering="crispEdges"/>
<line x1="1298.4" y1="558.1" x2="984.5" y2="396.5" stroke="#7878ec" stroke-dasharray="3 3" stroke-width="1" shape-rendering="crispEdges"/>
<line x1="489" y1="482.2" x2="489" y2="142" stroke="#7878ec" stroke-dasharray="3 3" stroke-width="1" shape-rendering="crispEdges"/>
<line x1="538.6" y1="473.7" x2="538.6" y2="142" stroke="#7878ec" stroke-dasharray="3 3" stroke-width="1" shape-rendering="crispEdges"/>
<line x1="588.1" y1="465.1" x2="588.1" y2="142" stroke="#7878ec" stroke-dasharray="3 3" stroke-width="1" shape-rendering="crispEdges"/>
<line x1="637.7" y1="456.5" x2="637.7" y2="142" stroke="#7878ec" stroke-dasharray="3 3" stroke-width="1" shape-rendering="crispEdges"/>
<line x1="687.2" y1="447.9" x2="687.2" y2="142" stroke="#7878ec" stroke-dasharray="3 3" stroke-width="1" shape-rendering="crispEdges"/>
<line x1="736.8" y1="439.4" x2="736.8" y2="142" stroke="#7878ec" stroke-dasharray="3 3" stroke-width="1" shape-rendering="crispEdges"/>
<line x1="786.3" y1="430.8" x2="786.3" y2="142" stroke="#7878ec" stroke-dasharray="3 3" stroke-width="1" shape-rendering="crispEdges"/>
<line x1="835.9" y1="422.2" x2="835.9" y2="142" stroke="#7878ec" stroke-dasharray="3 3" stroke-width="1" shape-rendering="crispEdges"/>
<line x1="885.4" y1="413.6" x2="885.4" y2="142" stroke="#7878ec" stroke-dasharray="3 3" stroke-width="1" shape-rendering="crispEdges"/>
<line x1="935" y1="405.1" x2="935" y2="142" stroke="#7878ec" stroke-dasharray="3 3" stroke-width="1" shape-rendering="crispEdges"/>
<line x1="1282.7" y1="550" x2="1282.7" y2="142" stroke="#7878ec" stroke-dasharray="3 3" stroke-width="1" shape-rendering="crispEdges"/>
<line x1="1267" y1="541.9" x2="1267" y2="142" stroke="#7878ec" stroke-dasharray="3 3" stroke-width="1" shape-rendering="crispEdges"/>
<line x1="1251.3" y1="533.9" x2="1251.3" y2="142" stroke="#7878ec" stroke-dasharray="3 3" stroke-width="1" shape-rendering="crispEdges"/>
<line x1="1235.6" y1="525.8" x2="1235.6" y2="142" stroke="#7878ec" stroke-dasharray="3 3" stroke-width="1" shape-rendering="crispEdges"/>
<line x1="1219.9" y1="517.7" x2="1219.9" y2="142" stroke="#7878ec" stroke-dasharray="3 3" stroke-width="1" shape-rendering="crispEdges"/>
<line x1="1204.2" y1="509.6" x2="1204.2" y2="142" stroke="#7878ec" stroke-dasharray="3 3" stroke-width="1" shape-rendering="crispEdges"/>
<line x1="1188.5" y1="501.5" x2="1188.5" y2="142" stroke="#7878ec" stroke-dasharray="3 3" stroke-width="1" shape-rendering="crispEdges"/>
<line x1="1172.8" y1="493.5" x2="1172.8" y2="142" stroke="#7878ec" stroke-dasharray="3 3" stroke-width="1" shape-rendering="crispEdges"/>
<line x1="1157.1" y1="485.4" x2="1157.1" y2="142" stroke="#7878ec" stroke-dasharray="3 3" stroke-width="1" shape-rendering="crispEdges"/>
<line x1="1141.4" y1="477.3" x2="1141.4" y2="142" stroke="#7878ec" stroke-dasharray="3 3" stroke-width="1" shape-rendering="crispEdges"/>
<line x1="1125.8" y1="469.2" x2="1125.8" y2="142" stroke="#7878ec" stroke-dasharray="3 3" stroke-width="1" shape-rendering="crispEdges"/>
<line x1="1110.1" y1="461.1" x2="1110.1" y2="142" stroke="#7878ec" stroke-dasharray="3 3" stroke-width="1" shape-rendering="crispEdges"/>
<line x1="1094.4" y1="453.1" x2="1094.4" y2="142" stroke="#7878ec" stroke-dasharray="3 3" stroke-width="1" shape-rendering="crispEdges"/>
<line x1="1078.7" y1="445" x2="1078.7" y2="142" stroke="#7878ec" stroke-dasharray="3 3" stroke-width="1" shape-rendering="crispEdges"/>
<line x1="1063" y1="436.9" x2="1063" y2="142" stroke="#7878ec" stroke-dasharray="3 3" stroke-width="1" shape-rendering="crispEdges"/>
<line x1="1047.3" y1="428.8" x2="1047.3" y2="142" stroke="#7878ec" stroke-dasharray="3 3" stroke-width="1" shape-rendering="crispEdges"/>
<line x1="1031.6" y1="420.7" x2="1031.6" y2="142" stroke="#7878ec" stroke-dasharray="3 3" stroke-width="1" shape-rendering="crispEdges"/>
<line x1="1015.9" y1="412.7" x2="1015.9" y2="142" stroke="#7878ec" stroke-dasharray="3 3" stroke-width="1" shape-rendering="crispEdges"/>
<line x1="1000.2" y1="404.6" x2="1000.2" y2="142" stroke="#7878ec" stroke-dasharray="3 3" stroke-width="1" shape-rendering="crispEdges"/>
<polyline points="441.5,158.8 984.5,64.5 1298.4,226.1" fill="none" stroke="#7878ec" stroke-dasharray="3 3" stroke-width="1" shape-rendering="crispEdges"/>
<polyline points="441.5,325.7 984.5,231.4 1298.4,393" fill="none" stroke="#7878ec" stroke-dasharray="3 3" stroke-width="1" shape-rendering="crispEdges"/>
<polyline points="439.5,490.8 753.4,652.4 1298.4,558.1" fill="none" stroke="#ccd0f2"/>
<line x1="439.5" y1="490.8" x2="984.5" y2="396.5" stroke="#ccd0f2"/>
<line x1="984.5" y1="396.5" x2="1298.4" y2="558.1" stroke="#ccd0f2"/>
<line x1="439.5" y1="490.8" x2="439.5" y2="142" stroke="#ccd0f2"/>
<polyline points="439.5,490.8 425.4,483.6 424.6,488.5" fill="none" stroke="#ccd0f2"/>
<polyline points="1298.4,558.1 1313.6,556.5 1313.6,561.4" fill="none" stroke="#ccd0f2"/>
<line x1="984.5" y1="396.5" x2="984.5" y2="142" stroke="#ccd0f2"/>
<line x1="1298.4" y1="558.1" x2="1298.4" y2="142" stroke="#ccd0f2"/>
<rect x="736.2" y="642.8" width="3" height="3" fill="#ccd0f2"/>
<rect x="720.5" y="634.7" width="3" height="3" fill="#ccd0f2"/>
<rect x="704.8" y="626.7" width="3" height="3" fill="#ccd0f2"/>
<rect x="689.1" y="618.6" width="3" height="3" fill="#ccd0f2"/>
<rect x="673.4" y="610.5" width="3" height="3" fill="#ccd0f2"/>
<rect x="657.7" y="602.4" width="3" height="3" fill="#ccd0f2"/>
<rect x="642" y="594.3" width="3" height="3" fill="#ccd0f2"/>
<rect x="626.3" y="586.3" width="3" height="3" fill="#ccd0f2"/>
<rect x="610.6" y="578.2" width="3" height="3" fill="#ccd0f2"/>
<rect x="595" y="570.1" width="3" height="3" fill="#ccd0f2"/>
<rect x="579.3" y="562" width="3" height="3" fill="#ccd0f2"/>
<rect x="563.6" y="553.9" width="3" height="3" fill="#ccd0f2"/>
<rect x="547.9" y="545.9" width="3" height="3" fill="#ccd0f2"/>
<rect x="532.2" y="537.8" width="3" height="3" fill="#ccd0f2"/>
<rect x="516.5" y="529.7" width="3" height="3" fill="#ccd0f2"/>
<rect x="500.8" y="521.6" width="3" height="3" fill="#ccd0f2"/>
<rect x="485.1" y="513.5" width="3" height="3" fill="#ccd0f2"/>
<rect x="469.4" y="505.5" width="3" height="3" fill="#ccd0f2"/>
<rect x="453.7" y="497.4" width="3" height="3" fill="#ccd0f2"/>
<rect x="801.4" y="642.3" width="3" height="3" fill="#ccd0f2"/>
<rect x="851" y="633.8" width="3" height="3" fill="#ccd0f2"/>
<rect x="900.5" y="625.2" width="3" height="3" fill="#ccd0f2"/>
<rect x="950.1" y="616.6" width="3" height="3" fill="#ccd0f2"/>
<rect x="999.6" y="608" width="3" height="3" fill="#ccd0f2"/>
<rect x="1049.2" y="599.5" width="3" height="3" fill="#ccd0f2"/>
<rect x="1098.7" y="590.9" width="3" height="3" fill="#ccd0f2"/>
<rect x="1148.3" y="582.3" width="3" height="3" fill="#ccd0f2"/>
<rect x="1197.8" y="573.7" width="3" height="3" fill="#ccd0f2"/>
<rect x="1247.3" y="565.2" width="3" height="3" fill="#ccd0f2"/>
</g>
<g clip-path="url(#cc)">
<polygon points="950.6,205.2 935,164.2 984.5,156.1 1000.2,197.8" fill="#3535d6" stroke="#3535d6" stroke-width="0.6"/>
<polygon points="901.1,212.2 885.4,171.2 935,164.2 950.6,205.2" fill="#3434d6" stroke="#3434d6" stroke-width="0.6"/>
<polygon points="966.3,225.1 950.6,205.2 1000.2,197.8 1015.9,218.1" fill="#2222ca" stroke="#2222ca" stroke-width="0.6"/>
<polygon points="851.6,220.5 835.9,179.1 885.4,171.2 901.1,212.2" fill="#3535d6" stroke="#3535d6" stroke-width="0.6"/>
<polygon points="916.8,232.1 901.1,212.2 950.6,205.2 966.3,225.1" fill="#2222ca" stroke="#2222ca" stroke-width="0.6"/>
<polygon points="982,244.3 966.3,225.1 1015.9,218.1 1031.6,236.9" fill="#2121c9" stroke="#2121c9" stroke-width="0.6"/>
<polygon points="802,226.6 786.3,182.3 835.9,179.1 851.6,220.5" fill="#3434d5" stroke="#3434d5" stroke-width="0.6"/>
<polygon points="867.2,239.2 851.6,220.5 901.1,212.2 916.8,232.1" fill="#2121ca" stroke="#2121ca" stroke-width="0.6"/>
<polygon points="932.5,250.2 916.8,232.1 966.3,225.1 982,244.3" fill="#1f1fc8" stroke="#1f1fc8" stroke-width="0.6"/>
<polygon points="997.7,263.1 982,244.3 1031.6,236.9 1047.3,257.2" fill="#2121c9" stroke="#2121c9" stroke-width="0.6"/>
<polygon points="752.5,233.2 736.8,190.2 786.3,182.3 802,226.6" fill="#3535d6" stroke="#3535d6" stroke-width="0.6"/>
<polygon points="817.7,246.3 802,226.6 851.6,220.5 867.2,239.2" fill="#2121c9" stroke="#2121c9" stroke-width="0.6"/>
<polygon points="882.9,258 867.2,239.2 916.8,232.1 932.5,250.2" fill="#2020c9" stroke="#2020c9" stroke-width="0.6"/>
<polygon points="948.2,269.4 932.5,250.2 982,244.3 997.7,263.1" fill="#2020c9" stroke="#2020c9" stroke-width="0.6"/>
<polygon points="1013.4,283.3 997.7,263.1 1047.3,257.2 1063,275.9" fill="#2121c9" stroke="#2121c9" stroke-width="0.6"/>
<polygon points="702.9,244.2 687.2,202 736.8,190.2 752.5,233.2" fill="#3737d7" stroke="#3737d7" stroke-width="0.6"/>
<polygon points="768.2,254.3 752.5,233.2 802,226.6 817.7,246.3" fill="#2323cb" stroke="#2323cb" stroke-width="0.6"/>
<polygon points="833.4,266.2 817.7,246.3 867.2,239.2 882.9,258" fill="#2121ca" stroke="#2121ca" stroke-width="0.6"/>
<polygon points="898.6,277.8 882.9,258 932.5,250.2 948.2,269.4" fill="#2222ca" stroke="#2222ca" stroke-width="0.6"/>
<polygon points="963.9,289.9 948.2,269.4 997.7,263.1 1013.4,283.3" fill="#2222ca" stroke="#2222ca" stroke-width="0.6"/>
<polygon points="1029.1,297.2 1013.4,283.3 1063,275.9 1078.7,288.9" fill="#1717c3" stroke="#1717c3" stroke-width="0.6"/>
<polygon points="653.4,261.1 637.7,218.5 687.2,202 702.9,244.2" fill="#3939d9" stroke="#3939d9" stroke-width="0.6"/>
<polygon points="718.6,264.5 702.9,244.2 752.5,233.2 768.2,254.3" fill="#2525cc" stroke="#2525cc" stroke-width="0.6"/>
<polygon points="783.9,274.4 768.2,254.3 817.7,246.3 833.4,266.2" fill="#2323ca" stroke="#2323ca" stroke-width="0.6"/>
<polygon points="849.1,286.3 833.4,266.2 882.9,258 898.6,277.8" fill="#2323ca" stroke="#2323ca" stroke-width="0.6"/>
<polygon points="914.3,299.5 898.6,277.8 948.2,269.4 963.9,289.9" fill="#2525cc" stroke="#2525cc" stroke-width="0.6"/>
<polygon points="979.6,304.5 963.9,289.9 1013.4,283.3 1029.1,297.2" fill="#1818c4" stroke="#1818c4" stroke-width="0.6"/>
<polygon points="1044.8,310.5 1029.1,297.2 1078.7,288.9 1094.4,302.3" fill="#1717c3" stroke="#1717c3" stroke-width="0.6"/>
<polygon points="603.8,271.2 588.1,227.3 637.7,218.5 653.4,261.1" fill="#3636d7" stroke="#3636d7" stroke-width="0.6"/>
<polygon points="669.1,281.2 653.4,261.1 702.9,244.2 718.6,264.5" fill="#2828ce" stroke="#2828ce" stroke-width="0.6"/>
<polygon points="734.3,284.2 718.6,264.5 768.2,254.3 783.9,274.4" fill="#2424cb" stroke="#2424cb" stroke-width="0.6"/>
<polygon points="799.5,294.4 783.9,274.4 833.4,266.2 849.1,286.3" fill="#2323ca" stroke="#2323ca" stroke-width="0.6"/>
<polygon points="864.8,307.3 849.1,286.3 898.6,277.8 914.3,299.5" fill="#2525cc" stroke="#2525cc" stroke-width="0.6"/>
<polygon points="930,313.3 914.3,299.5 963.9,289.9 979.6,304.5" fill="#1a1ac5" stroke="#1a1ac5" stroke-width="0.6"/>
<polygon points="995.3,318.3 979.6,304.5 1029.1,297.2 1044.8,310.5" fill="#1717c3" stroke="#1717c3" stroke-width="0.6"/>
<polygon points="1060.5,325.3 1044.8,310.5 1094.4,302.3 1110.1,316.2" fill="#1a1ac5" stroke="#1a1ac5" stroke-width="0.6"/>
<polygon points="554.3,282 538.6,237.2 588.1,227.3 603.8,271.2" fill="#3737d7" stroke="#3737d7" stroke-width="0.6"/>
<polygon points="619.5,292.2 603.8,271.2 653.4,261.1 669.1,281.2" fill="#2525cc" stroke="#2525cc" stroke-width="0.6"/>
<polygon points="684.8,301.4 669.1,281.2 718.6,264.5 734.3,284.2" fill="#2828ce" stroke="#2828ce" stroke-width="0.6"/>
<polygon points="750,304.3 734.3,284.2 783.9,274.4 799.5,294.4" fill="#2424cb" stroke="#2424cb" stroke-width="0.6"/>
<polygon points="815.2,315 799.5,294.4 849.1,286.3 864.8,307.3" fill="#2424cb" stroke="#2424cb" stroke-width="0.6"/>
<polygon points="880.5,323.3 864.8,307.3 914.3,299.5 930,313.3" fill="#1b1bc5" stroke="#1b1bc5" stroke-width="0.6"/>
<polygon points="945.7,327.3 930,313.3 979.6,304.5 995.3,318.3" fill="#1919c4" stroke="#1919c4" stroke-width="0.6"/>
<polygon points="1011,333.4 995.3,318.3 1044.8,310.5 1060.5,325.3" fill="#1a1ac5" stroke="#1a1ac5" stroke-width="0.6"/>
<polygon points="1076.2,339.5 1060.5,325.3 1110.1,316.2 1125.8,330.3" fill="#1919c5" stroke="#1919c5" stroke-width="0.6"/>
<polygon points="504.7,294.3 489,247.4 538.6,237.2 554.3,282" fill="#3838d8" stroke="#3838d8" stroke-width="0.6"/>
<polygon points="570,304.3 554.3,282 603.8,271.2 619.5,292.2" fill="#2727cd" stroke="#2727cd" stroke-width="0.6"/>
<polygon points="635.2,313.3 619.5,292.2 669.1,281.2 684.8,301.4" fill="#2626cc" stroke="#2626cc" stroke-width="0.6"/>
<polygon points="700.5,320.9 684.8,301.4 734.3,284.2 750,304.3" fill="#2727ce" stroke="#2727ce" stroke-width="0.6"/>
<polygon points="765.7,324.8 750,304.3 799.5,294.4 815.2,315" fill="#2525cc" stroke="#2525cc" stroke-width="0.6"/>
<polygon points="830.9,329.2 815.2,315 864.8,307.3 880.5,323.3" fill="#1a1ac5" stroke="#1a1ac5" stroke-width="0.6"/>
<polygon points="896.2,336.3 880.5,323.3 930,313.3 945.7,327.3" fill="#1818c4" stroke="#1818c4" stroke-width="0.6"/>
<polygon points="961.4,341.3 945.7,327.3 995.3,318.3 1011,333.4" fill="#1a1ac5" stroke="#1a1ac5" stroke-width="0.6"/>
<polygon points="1026.7,347.5 1011,333.4 1060.5,325.3 1076.2,339.5" fill="#1919c4" stroke="#1919c4" stroke-width="0.6"/>
<polygon points="1091.9,354.1 1076.2,339.5 1125.8,330.3 1141.4,345.5" fill="#1b1bc5" stroke="#1b1bc5" stroke-width="0.6"/>
<polygon points="455.2,302.5 439.5,255.2 489,247.4 504.7,294.3" fill="#3636d7" stroke="#3636d7" stroke-width="0.6"/>
<polygon points="520.4,316.1 504.7,294.3 554.3,282 570,304.3" fill="#2828ce" stroke="#2828ce" stroke-width="0.6"/>
<polygon points="585.7,325.6 570,304.3 619.5,292.2 635.2,313.3" fill="#2727cd" stroke="#2727cd" stroke-width="0.6"/>
<polygon points="650.9,333.2 635.2,313.3 684.8,301.4 700.5,320.9" fill="#2525cc" stroke="#2525cc" stroke-width="0.6"/>
<polygon points="716.2,340.2 700.5,320.9 750,304.3 765.7,324.8" fill="#2727cd" stroke="#2727cd" stroke-width="0.6"/>
<polygon points="781.4,340.2 765.7,324.8 815.2,315 830.9,329.2" fill="#1c1cc6" stroke="#1c1cc6" stroke-width="0.6"/>
<polygon points="846.6,344.4 830.9,329.2 880.5,323.3 896.2,336.3" fill="#1818c4" stroke="#1818c4" stroke-width="0.6"/>
<polygon points="911.9,352.2 896.2,336.3 945.7,327.3 961.4,341.3" fill="#1c1cc6" stroke="#1c1cc6" stroke-width="0.6"/>
<polygon points="977.1,356.6 961.4,341.3 1011,333.4 1026.7,347.5" fill="#1a1ac5" stroke="#1a1ac5" stroke-width="0.6"/>
<polygon points="1042.4,362.3 1026.7,347.5 1076.2,339.5 1091.9,354.1" fill="#1a1ac5" stroke="#1a1ac5" stroke-width="0.6"/>
<polygon points="1107.6,369.1 1091.9,354.1 1141.4,345.5 1157.1,359.2" fill="#1a1ac5" stroke="#1a1ac5" stroke-width="0.6"/>
<polygon points="470.9,324.1 455.2,302.5 504.7,294.3 520.4,316.1" fill="#2525cc" stroke="#2525cc" stroke-width="0.6"/>
<polygon points="536.1,336.9 520.4,316.1 570,304.3 585.7,325.6" fill="#2626cd" stroke="#2626cd" stroke-width="0.6"/>
<polygon points="601.4,345.5 585.7,325.6 635.2,313.3 650.9,333.2" fill="#2525cc" stroke="#2525cc" stroke-width="0.6"/>
<polygon points="666.6,351.4 650.9,333.2 700.5,320.9 716.2,340.2" fill="#2323cb" stroke="#2323cb" stroke-width="0.6"/>
<polygon points="731.8,353.4 716.2,340.2 765.7,324.8 781.4,340.2" fill="#1d1dc7" stroke="#1d1dc7" stroke-width="0.6"/>
<polygon points="797.1,354.2 781.4,340.2 830.9,329.2 846.6,344.4" fill="#1b1bc6" stroke="#1b1bc6" stroke-width="0.6"/>
<polygon points="862.3,358.1 846.6,344.4 896.2,336.3 911.9,352.2" fill="#1919c4" stroke="#1919c4" stroke-width="0.6"/>
<polygon points="927.6,365.9 911.9,352.2 961.4,341.3 977.1,356.6" fill="#1b1bc5" stroke="#1b1bc5" stroke-width="0.6"/>
<polygon points="992.8,371.4 977.1,356.6 1026.7,347.5 1042.4,362.3" fill="#1b1bc5" stroke="#1b1bc5" stroke-width="0.6"/>
<polygon points="1058,376.9 1042.4,362.3 1091.9,354.1 1107.6,369.1" fill="#1a1ac5" stroke="#1a1ac5" stroke-width="0.6"/>
<polygon points="1123.3,384.4 1107.6,369.1 1157.1,359.2 1172.8,374.5" fill="#1c1cc6" stroke="#1c1cc6" stroke-width="0.6"/>
<polygon points="486.6,345.2 470.9,324.1 520.4,316.1 536.1,336.9" fill="#2424cb" stroke="#2424cb" stroke-width="0.6"/>
<polygon points="551.8,358.3 536.1,336.9 585.7,325.6 601.4,345.5" fill="#2626cd" stroke="#2626cd" stroke-width="0.6"/>
<polygon points="617.1,362.7 601.4,345.5 650.9,333.2 666.6,351.4" fill="#2121ca" stroke="#2121ca" stroke-width="0.6"/>
<polygon points="682.3,364.4 666.6,351.4 716.2,340.2 731.8,353.4" fill="#1919c4" stroke="#1919c4" stroke-width="0.6"/>
<polygon points="747.5,367.6 731.8,353.4 781.4,340.2 797.1,354.2" fill="#1c1cc6" stroke="#1c1cc6" stroke-width="0.6"/>
<polygon points="812.8,368.3 797.1,354.2 846.6,344.4 862.3,358.1" fill="#1a1ac5" stroke="#1a1ac5" stroke-width="0.6"/>
<polygon points="878,373 862.3,358.1 911.9,352.2 927.6,365.9" fill="#1818c4" stroke="#1818c4" stroke-width="0.6"/>
<polygon points="943.3,382.3 927.6,365.9 977.1,356.6 992.8,371.4" fill="#1d1dc7" stroke="#1d1dc7" stroke-width="0.6"/>
<polygon points="1008.5,386.2 992.8,371.4 1042.4,362.3 1058,376.9" fill="#1b1bc5" stroke="#1b1bc5" stroke-width="0.6"/>
<polygon points="1073.7,392.2 1058,376.9 1107.6,369.1 1123.3,384.4" fill="#1b1bc5" stroke="#1b1bc5" stroke-width="0.6"/>
<polygon points="1139,399.2 1123.3,384.4 1172.8,374.5 1188.5,390.2" fill="#1c1cc6" stroke="#1c1cc6" stroke-width="0.6"/>
<polygon points="502.3,366.3 486.6,345.2 536.1,336.9 551.8,358.3" fill="#2525cc" stroke="#2525cc" stroke-width="0.6"/>
<polygon points="567.5,380.2 551.8,358.3 601.4,345.5 617.1,362.7" fill="#2626cd" stroke="#2626cd" stroke-width="0.6"/>
<polygon points="632.8,378.2 617.1,362.7 666.6,351.4 682.3,364.4" fill="#1c1cc6" stroke="#1c1cc6" stroke-width="0.6"/>
<polygon points="698,378 682.3,364.4 731.8,353.4 747.5,367.6" fill="#1a1ac5" stroke="#1a1ac5" stroke-width="0.6"/>
<polygon points="763.2,381.1 747.5,367.6 797.1,354.2 812.8,368.3" fill="#1b1bc6" stroke="#1b1bc6" stroke-width="0.6"/>
<polygon points="828.5,382.3 812.8,368.3 862.3,358.1 878,373" fill="#1a1ac5" stroke="#1a1ac5" stroke-width="0.6"/>
<polygon points="893.7,387.5 878,373 927.6,365.9 943.3,382.3" fill="#1a1ac5" stroke="#1a1ac5" stroke-width="0.6"/>
<polygon points="959,396.4 943.3,382.3 992.8,371.4 1008.5,386.2" fill="#1b1bc5" stroke="#1b1bc5" stroke-width="0.6"/>
<polygon points="1024.2,401.4 1008.5,386.2 1058,376.9 1073.7,392.2" fill="#1b1bc6" stroke="#1b1bc6" stroke-width="0.6"/>
<polygon points="1089.4,407.3 1073.7,392.2 1123.3,384.4 1139,399.2" fill="#1a1ac5" stroke="#1a1ac5" stroke-width="0.6"/>
<polygon points="1154.7,415.2 1139,399.2 1188.5,390.2 1204.2,405" fill="#1c1cc6" stroke="#1c1cc6" stroke-width="0.6"/>
<polygon points="518,388.1 502.3,366.3 551.8,358.3 567.5,380.2" fill="#2525cc" stroke="#2525cc" stroke-width="0.6"/>
<polygon points="583.2,393.4 567.5,380.2 617.1,362.7 632.8,378.2" fill="#1e1ec8" stroke="#1e1ec8" stroke-width="0.6"/>
<polygon points="648.5,390.2 632.8,378.2 682.3,364.4 698,378" fill="#1919c5" stroke="#1919c5" stroke-width="0.6"/>
<polygon points="713.7,391.4 698,378 747.5,367.6 763.2,381.1" fill="#1919c4" stroke="#1919c4" stroke-width="0.6"/>
<polygon points="778.9,395.6 763.2,381.1 812.8,368.3 828.5,382.3" fill="#1c1cc6" stroke="#1c1cc6" stroke-width="0.6"/>
<polygon points="844.2,397.2 828.5,382.3 878,373 893.7,387.5" fill="#1b1bc5" stroke="#1b1bc5" stroke-width="0.6"/>
<polygon points="909.4,402.2 893.7,387.5 943.3,382.3 959,396.4" fill="#1818c3" stroke="#1818c3" stroke-width="0.6"/>
<polygon points="974.7,410.2 959,396.4 1008.5,386.2 1024.2,401.4" fill="#1a1ac5" stroke="#1a1ac5" stroke-width="0.6"/>
<polygon points="1039.9,417.2 1024.2,401.4 1073.7,392.2 1089.4,407.3" fill="#1c1cc6" stroke="#1c1cc6" stroke-width="0.6"/>
<polygon points="1105.1,423.3 1089.4,407.3 1139,399.2 1154.7,415.2" fill="#1c1cc6" stroke="#1c1cc6" stroke-width="0.6"/>
<polygon points="1170.4,430.3 1154.7,415.2 1204.2,405 1219.9,420.3" fill="#1c1cc6" stroke="#1c1cc6" stroke-width="0.6"/>
<polygon points="533.7,401.4 518,388.1 567.5,380.2 583.2,393.4" fill="#1717c3" stroke="#1717c3" stroke-width="0.6"/>
<polygon points="598.9,406.4 583.2,393.4 632.8,378.2 648.5,390.2" fill="#1a1ac5" stroke="#1a1ac5" stroke-width="0.6"/>
<polygon points="664.1,401.1 648.5,390.2 698,378 713.7,391.4" fill="#1717c3" stroke="#1717c3" stroke-width="0.6"/>
<polygon points="729.4,404.2 713.7,391.4 763.2,381.1 778.9,395.6" fill="#1919c4" stroke="#1919c4" stroke-width="0.6"/>
<polygon points="794.6,408.4 778.9,395.6 828.5,382.3 844.2,397.2" fill="#1b1bc5" stroke="#1b1bc5" stroke-width="0.6"/>
<polygon points="859.9,411.3 844.2,397.2 893.7,387.5 909.4,402.2" fill="#1a1ac5" stroke="#1a1ac5" stroke-width="0.6"/>
<polygon points="925.1,417.1 909.4,402.2 959,396.4 974.7,410.2" fill="#1818c4" stroke="#1818c4" stroke-width="0.6"/>
<polygon points="990.3,425.3 974.7,410.2 1024.2,401.4 1039.9,417.2" fill="#1b1bc6" stroke="#1b1bc6" stroke-width="0.6"/>
<polygon points="1055.6,432.3 1039.9,417.2 1089.4,407.3 1105.1,423.3" fill="#1c1cc6" stroke="#1c1cc6" stroke-width="0.6"/>
<polygon points="1120.8,439.4 1105.1,423.3 1154.7,415.2 1170.4,430.3" fill="#1c1cc6" stroke="#1c1cc6" stroke-width="0.6"/>
<polygon points="1186.1,447.5 1170.4,430.3 1219.9,420.3 1235.6,438.4" fill="#2020c9" stroke="#2020c9" stroke-width="0.6"/>
<polygon points="549.4,414.4 533.7,401.4 583.2,393.4 598.9,406.4" fill="#1616c3" stroke="#1616c3" stroke-width="0.6"/>
<polygon points="614.6,419.5 598.9,406.4 648.5,390.2 664.1,401.1" fill="#1a1ac5" stroke="#1a1ac5" stroke-width="0.6"/>
<polygon points="679.8,416.4 664.1,401.1 713.7,391.4 729.4,404.2" fill="#1a1ac5" stroke="#1a1ac5" stroke-width="0.6"/>
<polygon points="745.1,418.3 729.4,404.2 778.9,395.6 794.6,408.4" fill="#1818c4" stroke="#1818c4" stroke-width="0.6"/>
<polygon points="810.3,423.3 794.6,408.4 844.2,397.2 859.9,411.3" fill="#1c1cc6" stroke="#1c1cc6" stroke-width="0.6"/>
<polygon points="875.6,426.4 859.9,411.3 909.4,402.2 925.1,417.1" fill="#1b1bc6" stroke="#1b1bc6" stroke-width="0.6"/>
<polygon points="940.8,432.3 925.1,417.1 974.7,410.2 990.3,425.3" fill="#1a1ac5" stroke="#1a1ac5" stroke-width="0.6"/>
<polygon points="1006,441.3 990.3,425.3 1039.9,417.2 1055.6,432.3" fill="#1c1cc6" stroke="#1c1cc6" stroke-width="0.6"/>
<polygon points="1071.3,448.3 1055.6,432.3 1105.1,423.3 1120.8,439.4" fill="#1d1dc7" stroke="#1d1dc7" stroke-width="0.6"/>
<polygon points="1136.5,455.3 1120.8,439.4 1170.4,430.3 1186.1,447.5" fill="#1d1dc7" stroke="#1d1dc7" stroke-width="0.6"/>
<polygon points="1201.8,464.4 1186.1,447.5 1235.6,438.4 1251.3,456.1" fill="#1f1fc8" stroke="#1f1fc8" stroke-width="0.6"/>
<polygon points="565.1,427.3 549.4,414.4 598.9,406.4 614.6,419.5" fill="#1717c3" stroke="#1717c3" stroke-width="0.6"/>
<polygon points="630.3,432.3 614.6,419.5 664.1,401.1 679.8,416.4" fill="#1e1ec8" stroke="#1e1ec8" stroke-width="0.6"/>
<polygon points="695.5,430.5 679.8,416.4 729.4,404.2 745.1,418.3" fill="#1b1bc6" stroke="#1b1bc6" stroke-width="0.6"/>
<polygon points="760.8,432.3 745.1,418.3 794.6,408.4 810.3,423.3" fill="#1a1ac5" stroke="#1a1ac5" stroke-width="0.6"/>
<polygon points="826,438.1 810.3,423.3 859.9,411.3 875.6,426.4" fill="#1d1dc7" stroke="#1d1dc7" stroke-width="0.6"/>
<polygon points="891.3,441.2 875.6,426.4 925.1,417.1 940.8,432.3" fill="#1b1bc6" stroke="#1b1bc6" stroke-width="0.6"/>
<polygon points="956.5,448.2 940.8,432.3 990.3,425.3 1006,441.3" fill="#1b1bc6" stroke="#1b1bc6" stroke-width="0.6"/>
<polygon points="1021.7,457.3 1006,441.3 1055.6,432.3 1071.3,448.3" fill="#1d1dc7" stroke="#1d1dc7" stroke-width="0.6"/>
<polygon points="1087,464.4 1071.3,448.3 1120.8,439.4 1136.5,455.3" fill="#1d1dc7" stroke="#1d1dc7" stroke-width="0.6"/>
<polygon points="1152.2,472.2 1136.5,455.3 1186.1,447.5 1201.8,464.4" fill="#1d1dc7" stroke="#1d1dc7" stroke-width="0.6"/>
<polygon points="1217.5,480.5 1201.8,464.4 1251.3,456.1 1267,472.1" fill="#1c1cc6" stroke="#1c1cc6" stroke-width="0.6"/>
<polygon points="580.8,440.2 565.1,427.3 614.6,419.5 630.3,432.3" fill="#1616c2" stroke="#1616c2" stroke-width="0.6"/>
<polygon points="646,446.4 630.3,432.3 679.8,416.4 695.5,430.5" fill="#1e1ec7" stroke="#1e1ec7" stroke-width="0.6"/>
<polygon points="711.2,443.8 695.5,430.5 745.1,418.3 760.8,432.3" fill="#1a1ac5" stroke="#1a1ac5" stroke-width="0.6"/>
<polygon points="776.5,447 760.8,432.3 810.3,423.3 826,438.1" fill="#1b1bc5" stroke="#1b1bc5" stroke-width="0.6"/>
<polygon points="841.7,451.7 826,438.1 875.6,426.4 891.3,441.2" fill="#1b1bc6" stroke="#1b1bc6" stroke-width="0.6"/>
<polygon points="907,457.6 891.3,441.2 940.8,432.3 956.5,448.2" fill="#1d1dc7" stroke="#1d1dc7" stroke-width="0.6"/>
<polygon points="972.2,464.3 956.5,448.2 1006,441.3 1021.7,457.3" fill="#1b1bc6" stroke="#1b1bc6" stroke-width="0.6"/>
<polygon points="1037.4,473.4 1021.7,457.3 1071.3,448.3 1087,464.4" fill="#1d1dc7" stroke="#1d1dc7" stroke-width="0.6"/>
<polygon points="1102.7,480.5 1087,464.4 1136.5,455.3 1152.2,472.2" fill="#1d1dc7" stroke="#1d1dc7" stroke-width="0.6"/>
<polygon points="1167.9,488.3 1152.2,472.2 1201.8,464.4 1217.5,480.5" fill="#1c1cc6" stroke="#1c1cc6" stroke-width="0.6"/>
<polygon points="1233.2,495.3 1217.5,480.5 1267,472.1 1282.7,487.4" fill="#1a1ac5" stroke="#1a1ac5" stroke-width="0.6"/>
<polygon points="596.5,454.5 580.8,440.2 630.3,432.3 646,446.4" fill="#1919c4" stroke="#1919c4" stroke-width="0.6"/>
<polygon points="661.7,459.4 646,446.4 695.5,430.5 711.2,443.8" fill="#1c1cc6" stroke="#1c1cc6" stroke-width="0.6"/>
<polygon points="726.9,457.3 711.2,443.8 760.8,432.3 776.5,447" fill="#1b1bc5" stroke="#1b1bc5" stroke-width="0.6"/>
<polygon points="792.2,462.3 776.5,447 826,438.1 841.7,451.7" fill="#1b1bc5" stroke="#1b1bc5" stroke-width="0.6"/>
<polygon points="857.4,468.4 841.7,451.7 891.3,441.2 907,457.6" fill="#1f1fc8" stroke="#1f1fc8" stroke-width="0.6"/>
<polygon points="922.6,472.3 907,457.6 956.5,448.2 972.2,464.3" fill="#1c1cc6" stroke="#1c1cc6" stroke-width="0.6"/>
<polygon points="987.9,480.3 972.2,464.3 1021.7,457.3 1037.4,473.4" fill="#1c1cc6" stroke="#1c1cc6" stroke-width="0.6"/>
<polygon points="1053.1,488.2 1037.4,473.4 1087,464.4 1102.7,480.5" fill="#1b1bc6" stroke="#1b1bc6" stroke-width="0.6"/>
<polygon points="1118.4,496.4 1102.7,480.5 1152.2,472.2 1167.9,488.3" fill="#1c1cc6" stroke="#1c1cc6" stroke-width="0.6"/>
<polygon points="1183.6,503.3 1167.9,488.3 1217.5,480.5 1233.2,495.3" fill="#1a1ac5" stroke="#1a1ac5" stroke-width="0.6"/>
<polygon points="1248.8,510.9 1233.2,495.3 1282.7,487.4 1298.4,502.4" fill="#1b1bc6" stroke="#1b1bc6" stroke-width="0.6"/>
<polygon points="612.1,467.2 596.5,454.5 646,446.4 661.7,459.4" fill="#1616c2" stroke="#1616c2" stroke-width="0.6"/>
<polygon points="677.4,472.5 661.7,459.4 711.2,443.8 726.9,457.3" fill="#1c1cc6" stroke="#1c1cc6" stroke-width="0.6"/>
<polygon points="742.6,471.2 726.9,457.3 776.5,447 792.2,462.3" fill="#1b1bc5" stroke="#1b1bc5" stroke-width="0.6"/>
<polygon points="807.9,476.4 792.2,462.3 841.7,451.7 857.4,468.4" fill="#1c1cc6" stroke="#1c1cc6" stroke-width="0.6"/>
<polygon points="873.1,483.3 857.4,468.4 907,457.6 922.6,472.3" fill="#1c1cc6" stroke="#1c1cc6" stroke-width="0.6"/>
<polygon points="938.3,488.4 922.6,472.3 972.2,464.3 987.9,480.3" fill="#1c1cc6" stroke="#1c1cc6" stroke-width="0.6"/>
<polygon points="1003.6,496.3 987.9,480.3 1037.4,473.4 1053.1,488.2" fill="#1b1bc5" stroke="#1b1bc5" stroke-width="0.6"/>
<polygon points="1068.8,504.4 1053.1,488.2 1102.7,480.5 1118.4,496.4" fill="#1c1cc6" stroke="#1c1cc6" stroke-width="0.6"/>
<polygon points="1134.1,512.3 1118.4,496.4 1167.9,488.3 1183.6,503.3" fill="#1c1cc6" stroke="#1c1cc6" stroke-width="0.6"/>
<polygon points="1199.3,519.4 1183.6,503.3 1233.2,495.3 1248.8,510.9" fill="#1c1cc6" stroke="#1c1cc6" stroke-width="0.6"/>
<polygon points="627.8,480.3 612.1,467.2 661.7,459.4 677.4,472.5" fill="#1717c3" stroke="#1717c3" stroke-width="0.6"/>
<polygon points="693.1,485.9 677.4,472.5 726.9,457.3 742.6,471.2" fill="#1c1cc6" stroke="#1c1cc6" stroke-width="0.6"/>
<polygon points="758.3,486.6 742.6,471.2 792.2,462.3 807.9,476.4" fill="#1b1bc5" stroke="#1b1bc5" stroke-width="0.6"/>
<polygon points="823.6,491.4 807.9,476.4 857.4,468.4 873.1,483.3" fill="#1a1ac5" stroke="#1a1ac5" stroke-width="0.6"/>
<polygon points="888.8,499.4 873.1,483.3 922.6,472.3 938.3,488.4" fill="#1e1ec8" stroke="#1e1ec8" stroke-width="0.6"/>
<polygon points="954,505.3 938.3,488.4 987.9,480.3 1003.6,496.3" fill="#1d1dc7" stroke="#1d1dc7" stroke-width="0.6"/>
<polygon points="1019.3,512.4 1003.6,496.3 1053.1,488.2 1068.8,504.4" fill="#1c1cc6" stroke="#1c1cc6" stroke-width="0.6"/>
<polygon points="1084.5,520.5 1068.8,504.4 1118.4,496.4 1134.1,512.3" fill="#1c1cc6" stroke="#1c1cc6" stroke-width="0.6"/>
<polygon points="1149.8,528.3 1134.1,512.3 1183.6,503.3 1199.3,519.4" fill="#1d1dc7" stroke="#1d1dc7" stroke-width="0.6"/>
<polygon points="643.5,493.6 627.8,480.3 677.4,472.5 693.1,485.9" fill="#1717c3" stroke="#1717c3" stroke-width="0.6"/>
<polygon points="708.8,498.3 693.1,485.9 742.6,471.2 758.3,486.6" fill="#1c1cc6" stroke="#1c1cc6" stroke-width="0.6"/>
<polygon points="774,501.1 758.3,486.6 807.9,476.4 823.6,491.4" fill="#1b1bc6" stroke="#1b1bc6" stroke-width="0.6"/>
<polygon points="839.3,508.4 823.6,491.4 873.1,483.3 888.8,499.4" fill="#1d1dc7" stroke="#1d1dc7" stroke-width="0.6"/>
<polygon points="904.5,515.6 888.8,499.4 938.3,488.4 954,505.3" fill="#1f1fc8" stroke="#1f1fc8" stroke-width="0.6"/>
<polygon points="969.7,521.3 954,505.3 1003.6,496.3 1019.3,512.4" fill="#1d1dc7" stroke="#1d1dc7" stroke-width="0.6"/>
<polygon points="1035,529.4 1019.3,512.4 1068.8,504.4 1084.5,520.5" fill="#1d1dc7" stroke="#1d1dc7" stroke-width="0.6"/>
<polygon points="1100.2,536.1 1084.5,520.5 1134.1,512.3 1149.8,528.3" fill="#1c1cc6" stroke="#1c1cc6" stroke-width="0.6"/>
<polygon points="659.2,506.6 643.5,493.6 693.1,485.9 708.8,498.3" fill="#1616c2" stroke="#1616c2" stroke-width="0.6"/>
<polygon points="724.5,512.3 708.8,498.3 758.3,486.6 774,501.1" fill="#1b1bc6" stroke="#1b1bc6" stroke-width="0.6"/>
<polygon points="789.7,517.5 774,501.1 823.6,491.4 839.3,508.4" fill="#1e1ec8" stroke="#1e1ec8" stroke-width="0.6"/>
<polygon points="854.9,524.4 839.3,508.4 888.8,499.4 904.5,515.6" fill="#1d1dc7" stroke="#1d1dc7" stroke-width="0.6"/>
<polygon points="920.2,530.3 904.5,515.6 954,505.3 969.7,521.3" fill="#1c1cc6" stroke="#1c1cc6" stroke-width="0.6"/>
<polygon points="985.4,537.8 969.7,521.3 1019.3,512.4 1035,529.4" fill="#1e1ec7" stroke="#1e1ec7" stroke-width="0.6"/>
<polygon points="1050.7,545.5 1035,529.4 1084.5,520.5 1100.2,536.1" fill="#1d1dc7" stroke="#1d1dc7" stroke-width="0.6"/>
<polygon points="674.9,520.3 659.2,506.6 708.8,498.3 724.5,512.3" fill="#1818c4" stroke="#1818c4" stroke-width="0.6"/>
<polygon points="740.2,528.4 724.5,512.3 774,501.1 789.7,517.5" fill="#1e1ec8" stroke="#1e1ec8" stroke-width="0.6"/>
<polygon points="805.4,533.1 789.7,517.5 839.3,508.4 854.9,524.4" fill="#1c1cc6" stroke="#1c1cc6" stroke-width="0.6"/>
<polygon points="870.6,539.2 854.9,524.4 904.5,515.6 920.2,530.3" fill="#1a1ac5" stroke="#1a1ac5" stroke-width="0.6"/>
<polygon points="935.9,546.7 920.2,530.3 969.7,521.3 985.4,537.8" fill="#1d1dc7" stroke="#1d1dc7" stroke-width="0.6"/>
<polygon points="1001.1,553.3 985.4,537.8 1035,529.4 1050.7,545.5" fill="#1c1cc6" stroke="#1c1cc6" stroke-width="0.6"/>
<polygon points="690.6,536.2 674.9,520.3 724.5,512.3 740.2,528.4" fill="#1c1cc6" stroke="#1c1cc6" stroke-width="0.6"/>
<polygon points="755.9,544.1 740.2,528.4 789.7,517.5 805.4,533.1" fill="#1d1dc7" stroke="#1d1dc7" stroke-width="0.6"/>
<polygon points="821.1,548.4 805.4,533.1 854.9,524.4 870.6,539.2" fill="#1b1bc6" stroke="#1b1bc6" stroke-width="0.6"/>
<polygon points="886.3,555.3 870.6,539.2 920.2,530.3 935.9,546.7" fill="#1d1dc7" stroke="#1d1dc7" stroke-width="0.6"/>
<polygon points="951.6,561.8 935.9,546.7 985.4,537.8 1001.1,553.3" fill="#1b1bc6" stroke="#1b1bc6" stroke-width="0.6"/>
<polygon points="706.3,552.3 690.6,536.2 740.2,528.4 755.9,544.1" fill="#1c1cc6" stroke="#1c1cc6" stroke-width="0.6"/>
<polygon points="771.6,559.3 755.9,544.1 805.4,533.1 821.1,548.4" fill="#1d1dc7" stroke="#1d1dc7" stroke-width="0.6"/>
<polygon points="836.8,564.4 821.1,548.4 870.6,539.2 886.3,555.3" fill="#1d1dc7" stroke="#1d1dc7" stroke-width="0.6"/>
<polygon points="902,570.2 886.3,555.3 935.9,546.7 951.6,561.8" fill="#1b1bc5" stroke="#1b1bc5" stroke-width="0.6"/>
<polygon points="722,567.2 706.3,552.3 755.9,544.1 771.6,559.3" fill="#1a1ac5" stroke="#1a1ac5" stroke-width="0.6"/>
<polygon points="787.2,573.4 771.6,559.3 821.1,548.4 836.8,564.4" fill="#1c1cc6" stroke="#1c1cc6" stroke-width="0.6"/>
<polygon points="852.5,578.8 836.8,564.4 886.3,555.3 902,570.2" fill="#1a1ac5" stroke="#1a1ac5" stroke-width="0.6"/>
<polygon points="737.7,581.3 722,567.2 771.6,559.3 787.2,573.4" fill="#1919c4" stroke="#1919c4" stroke-width="0.6"/>
<polygon points="802.9,587.3 787.2,573.4 836.8,564.4 852.5,578.8" fill="#1919c4" stroke="#1919c4" stroke-width="0.6"/>
<polygon points="753.4,595.3 737.7,581.3 787.2,573.4 802.9,587.3" fill="#1818c4" stroke="#1818c4" stroke-width="0.6"/>
</g><g clip-path="url(#cc)">
<polyline points="753.4,595.3 802.9,587.3 852.5,578.8 902,570.2 951.6,561.8 1001.1,553.3 1050.7,545.5 1100.2,536.1 1149.8,528.3 1199.3,519.4 1248.8,510.9 1298.4,502.4" fill="none" stroke="#ccd0f2" stroke-width="1.05"/>
<polyline points="737.7,581.3 787.2,573.4 836.8,564.4 886.3,555.3 935.9,546.7 985.4,537.8 1035,529.4 1084.5,520.5 1134.1,512.3 1183.6,503.3 1233.2,495.3 1282.7,487.4" fill="none" stroke="#ccd0f2" stroke-width="1.05"/>
<polyline points="722,567.2 771.6,559.3 821.1,548.4 870.6,539.2 920.2,530.3 969.7,521.3 1019.3,512.4 1068.8,504.4 1118.4,496.4 1167.9,488.3 1217.5,480.5 1267,472.1" fill="none" stroke="#ccd0f2" stroke-width="1.05"/>
<polyline points="706.3,552.3 755.9,544.1 805.4,533.1 854.9,524.4 904.5,515.6 954,505.3 1003.6,496.3 1053.1,488.2 1102.7,480.5 1152.2,472.2 1201.8,464.4 1251.3,456.1" fill="none" stroke="#ccd0f2" stroke-width="1.05"/>
<polyline points="690.6,536.2 740.2,528.4 789.7,517.5 839.3,508.4 888.8,499.4 938.3,488.4 987.9,480.3 1037.4,473.4 1087,464.4 1136.5,455.3 1186.1,447.5 1235.6,438.4" fill="none" stroke="#ccd0f2" stroke-width="1.05"/>
<polyline points="674.9,520.3 724.5,512.3 774,501.1 823.6,491.4 873.1,483.3 922.6,472.3 972.2,464.3 1021.7,457.3 1071.3,448.3 1120.8,439.4 1170.4,430.3 1219.9,420.3" fill="none" stroke="#ccd0f2" stroke-width="1.05"/>
<polyline points="659.2,506.6 708.8,498.3 758.3,486.6 807.9,476.4 857.4,468.4 907,457.6 956.5,448.2 1006,441.3 1055.6,432.3 1105.1,423.3 1154.7,415.2 1204.2,405" fill="none" stroke="#ccd0f2" stroke-width="1.05"/>
<polyline points="643.5,493.6 693.1,485.9 742.6,471.2 792.2,462.3 841.7,451.7 891.3,441.2 940.8,432.3 990.3,425.3 1039.9,417.2 1089.4,407.3 1139,399.2 1188.5,390.2" fill="none" stroke="#ccd0f2" stroke-width="1.05"/>
<polyline points="627.8,480.3 677.4,472.5 726.9,457.3 776.5,447 826,438.1 875.6,426.4 925.1,417.1 974.7,410.2 1024.2,401.4 1073.7,392.2 1123.3,384.4 1172.8,374.5" fill="none" stroke="#ccd0f2" stroke-width="1.05"/>
<polyline points="612.1,467.2 661.7,459.4 711.2,443.8 760.8,432.3 810.3,423.3 859.9,411.3 909.4,402.2 959,396.4 1008.5,386.2 1058,376.9 1107.6,369.1 1157.1,359.2" fill="none" stroke="#ccd0f2" stroke-width="1.05"/>
<polyline points="596.5,454.5 646,446.4 695.5,430.5 745.1,418.3 794.6,408.4 844.2,397.2 893.7,387.5 943.3,382.3 992.8,371.4 1042.4,362.3 1091.9,354.1 1141.4,345.5" fill="none" stroke="#ccd0f2" stroke-width="1.05"/>
<polyline points="580.8,440.2 630.3,432.3 679.8,416.4 729.4,404.2 778.9,395.6 828.5,382.3 878,373 927.6,365.9 977.1,356.6 1026.7,347.5 1076.2,339.5 1125.8,330.3" fill="none" stroke="#ccd0f2" stroke-width="1.05"/>
<polyline points="565.1,427.3 614.6,419.5 664.1,401.1 713.7,391.4 763.2,381.1 812.8,368.3 862.3,358.1 911.9,352.2 961.4,341.3 1011,333.4 1060.5,325.3 1110.1,316.2" fill="none" stroke="#ccd0f2" stroke-width="1.05"/>
<polyline points="549.4,414.4 598.9,406.4 648.5,390.2 698,378 747.5,367.6 797.1,354.2 846.6,344.4 896.2,336.3 945.7,327.3 995.3,318.3 1044.8,310.5 1094.4,302.3" fill="none" stroke="#ccd0f2" stroke-width="1.05"/>
<polyline points="533.7,401.4 583.2,393.4 632.8,378.2 682.3,364.4 731.8,353.4 781.4,340.2 830.9,329.2 880.5,323.3 930,313.3 979.6,304.5 1029.1,297.2 1078.7,288.9" fill="none" stroke="#ccd0f2" stroke-width="1.05"/>
<polyline points="518,388.1 567.5,380.2 617.1,362.7 666.6,351.4 716.2,340.2 765.7,324.8 815.2,315 864.8,307.3 914.3,299.5 963.9,289.9 1013.4,283.3 1063,275.9" fill="none" stroke="#ccd0f2" stroke-width="1.05"/>
<polyline points="502.3,366.3 551.8,358.3 601.4,345.5 650.9,333.2 700.5,320.9 750,304.3 799.5,294.4 849.1,286.3 898.6,277.8 948.2,269.4 997.7,263.1 1047.3,257.2" fill="none" stroke="#ccd0f2" stroke-width="1.05"/>
<polyline points="486.6,345.2 536.1,336.9 585.7,325.6 635.2,313.3 684.8,301.4 734.3,284.2 783.9,274.4 833.4,266.2 882.9,258 932.5,250.2 982,244.3 1031.6,236.9" fill="none" stroke="#ccd0f2" stroke-width="1.05"/>
<polyline points="470.9,324.1 520.4,316.1 570,304.3 619.5,292.2 669.1,281.2 718.6,264.5 768.2,254.3 817.7,246.3 867.2,239.2 916.8,232.1 966.3,225.1 1015.9,218.1" fill="none" stroke="#ccd0f2" stroke-width="1.05"/>
<polyline points="455.2,302.5 504.7,294.3 554.3,282 603.8,271.2 653.4,261.1 702.9,244.2 752.5,233.2 802,226.6 851.6,220.5 901.1,212.2 950.6,205.2 1000.2,197.8" fill="none" stroke="#ccd0f2" stroke-width="1.05"/>
<polyline points="439.5,255.2 489,247.4 538.6,237.2 588.1,227.3 637.7,218.5 687.2,202 736.8,190.2 786.3,182.3 835.9,179.1 885.4,171.2 935,164.2 984.5,156.1" fill="none" stroke="#ccd0f2" stroke-width="1.05"/>
<polyline points="753.4,595.3 737.7,581.3 722,567.2 706.3,552.3 690.6,536.2 674.9,520.3 659.2,506.6 643.5,493.6 627.8,480.3 612.1,467.2 596.5,454.5 580.8,440.2 565.1,427.3 549.4,414.4 533.7,401.4 518,388.1 502.3,366.3 486.6,345.2 470.9,324.1 455.2,302.5 439.5,255.2" fill="none" stroke="#ccd0f2" stroke-width="1.05"/>
<polyline points="802.9,587.3 787.2,573.4 771.6,559.3 755.9,544.1 740.2,528.4 724.5,512.3 708.8,498.3 693.1,485.9 677.4,472.5 661.7,459.4 646,446.4 630.3,432.3 614.6,419.5 598.9,406.4 583.2,393.4 567.5,380.2 551.8,358.3 536.1,336.9 520.4,316.1 504.7,294.3 489,247.4" fill="none" stroke="#ccd0f2" stroke-width="1.05"/>
<polyline points="852.5,578.8 836.8,564.4 821.1,548.4 805.4,533.1 789.7,517.5 774,501.1 758.3,486.6 742.6,471.2 726.9,457.3 711.2,443.8 695.5,430.5 679.8,416.4 664.1,401.1 648.5,390.2 632.8,378.2 617.1,362.7 601.4,345.5 585.7,325.6 570,304.3 554.3,282 538.6,237.2" fill="none" stroke="#ccd0f2" stroke-width="1.05"/>
<polyline points="902,570.2 886.3,555.3 870.6,539.2 854.9,524.4 839.3,508.4 823.6,491.4 807.9,476.4 792.2,462.3 776.5,447 760.8,432.3 745.1,418.3 729.4,404.2 713.7,391.4 698,378 682.3,364.4 666.6,351.4 650.9,333.2 635.2,313.3 619.5,292.2 603.8,271.2 588.1,227.3" fill="none" stroke="#ccd0f2" stroke-width="1.05"/>
<polyline points="951.6,561.8 935.9,546.7 920.2,530.3 904.5,515.6 888.8,499.4 873.1,483.3 857.4,468.4 841.7,451.7 826,438.1 810.3,423.3 794.6,408.4 778.9,395.6 763.2,381.1 747.5,367.6 731.8,353.4 716.2,340.2 700.5,320.9 684.8,301.4 669.1,281.2 653.4,261.1 637.7,218.5" fill="none" stroke="#ccd0f2" stroke-width="1.05"/>
<polyline points="1001.1,553.3 985.4,537.8 969.7,521.3 954,505.3 938.3,488.4 922.6,472.3 907,457.6 891.3,441.2 875.6,426.4 859.9,411.3 844.2,397.2 828.5,382.3 812.8,368.3 797.1,354.2 781.4,340.2 765.7,324.8 750,304.3 734.3,284.2 718.6,264.5 702.9,244.2 687.2,202" fill="none" stroke="#ccd0f2" stroke-width="1.05"/>
<polyline points="1050.7,545.5 1035,529.4 1019.3,512.4 1003.6,496.3 987.9,480.3 972.2,464.3 956.5,448.2 940.8,432.3 925.1,417.1 909.4,402.2 893.7,387.5 878,373 862.3,358.1 846.6,344.4 830.9,329.2 815.2,315 799.5,294.4 783.9,274.4 768.2,254.3 752.5,233.2 736.8,190.2" fill="none" stroke="#ccd0f2" stroke-width="1.05"/>
<polyline points="1100.2,536.1 1084.5,520.5 1068.8,504.4 1053.1,488.2 1037.4,473.4 1021.7,457.3 1006,441.3 990.3,425.3 974.7,410.2 959,396.4 943.3,382.3 927.6,365.9 911.9,352.2 896.2,336.3 880.5,323.3 864.8,307.3 849.1,286.3 833.4,266.2 817.7,246.3 802,226.6 786.3,182.3" fill="none" stroke="#ccd0f2" stroke-width="1.05"/>
<polyline points="1149.8,528.3 1134.1,512.3 1118.4,496.4 1102.7,480.5 1087,464.4 1071.3,448.3 1055.6,432.3 1039.9,417.2 1024.2,401.4 1008.5,386.2 992.8,371.4 977.1,356.6 961.4,341.3 945.7,327.3 930,313.3 914.3,299.5 898.6,277.8 882.9,258 867.2,239.2 851.6,220.5 835.9,179.1" fill="none" stroke="#ccd0f2" stroke-width="1.05"/>
<polyline points="1199.3,519.4 1183.6,503.3 1167.9,488.3 1152.2,472.2 1136.5,455.3 1120.8,439.4 1105.1,423.3 1089.4,407.3 1073.7,392.2 1058,376.9 1042.4,362.3 1026.7,347.5 1011,333.4 995.3,318.3 979.6,304.5 963.9,289.9 948.2,269.4 932.5,250.2 916.8,232.1 901.1,212.2 885.4,171.2" fill="none" stroke="#ccd0f2" stroke-width="1.05"/>
<polyline points="1248.8,510.9 1233.2,495.3 1217.5,480.5 1201.8,464.4 1186.1,447.5 1170.4,430.3 1154.7,415.2 1139,399.2 1123.3,384.4 1107.6,369.1 1091.9,354.1 1076.2,339.5 1060.5,325.3 1044.8,310.5 1029.1,297.2 1013.4,283.3 997.7,263.1 982,244.3 966.3,225.1 950.6,205.2 935,164.2" fill="none" stroke="#ccd0f2" stroke-width="1.05"/>
<polyline points="1298.4,502.4 1282.7,487.4 1267,472.1 1251.3,456.1 1235.6,438.4 1219.9,420.3 1204.2,405 1188.5,390.2 1172.8,374.5 1157.1,359.2 1141.4,345.5 1125.8,330.3 1110.1,316.2 1094.4,302.3 1078.7,288.9 1063,275.9 1047.3,257.2 1031.6,236.9 1015.9,218.1 1000.2,197.8 984.5,156.1" fill="none" stroke="#ccd0f2" stroke-width="1.05"/>
<rect x="751.8" y="593.7" width="3.2" height="3.2" fill="#c8d0ec"/>
<rect x="801.3" y="585.7" width="3.2" height="3.2" fill="#c8d0ec"/>
<rect x="850.9" y="577.2" width="3.2" height="3.2" fill="#c8d0ec"/>
<rect x="900.4" y="568.6" width="3.2" height="3.2" fill="#c8d0ec"/>
<rect x="950" y="560.2" width="3.2" height="3.2" fill="#c8d0ec"/>
<rect x="999.5" y="551.7" width="3.2" height="3.2" fill="#c8d0ec"/>
<rect x="1049.1" y="543.9" width="3.2" height="3.2" fill="#c8d0ec"/>
<rect x="1098.6" y="534.5" width="3.2" height="3.2" fill="#c8d0ec"/>
<rect x="1148.2" y="526.7" width="3.2" height="3.2" fill="#c8d0ec"/>
<rect x="1197.7" y="517.8" width="3.2" height="3.2" fill="#c8d0ec"/>
<rect x="1247.2" y="509.3" width="3.2" height="3.2" fill="#c8d0ec"/>
<rect x="1296.8" y="500.8" width="3.2" height="3.2" fill="#c8d0ec"/>
<rect x="736.1" y="579.7" width="3.2" height="3.2" fill="#c8d0ec"/>
<rect x="785.6" y="571.8" width="3.2" height="3.2" fill="#c8d0ec"/>
<rect x="835.2" y="562.8" width="3.2" height="3.2" fill="#c8d0ec"/>
<rect x="884.7" y="553.7" width="3.2" height="3.2" fill="#c8d0ec"/>
<rect x="934.3" y="545.1" width="3.2" height="3.2" fill="#c8d0ec"/>
<rect x="983.8" y="536.2" width="3.2" height="3.2" fill="#c8d0ec"/>
<rect x="1033.4" y="527.8" width="3.2" height="3.2" fill="#c8d0ec"/>
<rect x="1082.9" y="518.9" width="3.2" height="3.2" fill="#c8d0ec"/>
<rect x="1132.5" y="510.7" width="3.2" height="3.2" fill="#c8d0ec"/>
<rect x="1182" y="501.7" width="3.2" height="3.2" fill="#c8d0ec"/>
<rect x="1231.6" y="493.7" width="3.2" height="3.2" fill="#c8d0ec"/>
<rect x="1281.1" y="485.8" width="3.2" height="3.2" fill="#c8d0ec"/>
<rect x="720.4" y="565.6" width="3.2" height="3.2" fill="#c8d0ec"/>
<rect x="770" y="557.7" width="3.2" height="3.2" fill="#c8d0ec"/>
<rect x="819.5" y="546.8" width="3.2" height="3.2" fill="#c8d0ec"/>
<rect x="869" y="537.6" width="3.2" height="3.2" fill="#c8d0ec"/>
<rect x="918.6" y="528.7" width="3.2" height="3.2" fill="#c8d0ec"/>
<rect x="968.1" y="519.7" width="3.2" height="3.2" fill="#c8d0ec"/>
<rect x="1017.7" y="510.8" width="3.2" height="3.2" fill="#c8d0ec"/>
<rect x="1067.2" y="502.8" width="3.2" height="3.2" fill="#c8d0ec"/>
<rect x="1116.8" y="494.8" width="3.2" height="3.2" fill="#c8d0ec"/>
<rect x="1166.3" y="486.7" width="3.2" height="3.2" fill="#c8d0ec"/>
<rect x="1215.9" y="478.9" width="3.2" height="3.2" fill="#c8d0ec"/>
<rect x="1265.4" y="470.5" width="3.2" height="3.2" fill="#c8d0ec"/>
<rect x="704.7" y="550.7" width="3.2" height="3.2" fill="#c8d0ec"/>
<rect x="754.3" y="542.5" width="3.2" height="3.2" fill="#c8d0ec"/>
<rect x="803.8" y="531.5" width="3.2" height="3.2" fill="#c8d0ec"/>
<rect x="853.3" y="522.8" width="3.2" height="3.2" fill="#c8d0ec"/>
<rect x="902.9" y="514" width="3.2" height="3.2" fill="#c8d0ec"/>
<rect x="952.4" y="503.7" width="3.2" height="3.2" fill="#c8d0ec"/>
<rect x="1002" y="494.7" width="3.2" height="3.2" fill="#c8d0ec"/>
<rect x="1051.5" y="486.6" width="3.2" height="3.2" fill="#c8d0ec"/>
<rect x="1101.1" y="478.9" width="3.2" height="3.2" fill="#c8d0ec"/>
<rect x="1150.6" y="470.6" width="3.2" height="3.2" fill="#c8d0ec"/>
<rect x="1200.2" y="462.8" width="3.2" height="3.2" fill="#c8d0ec"/>
<rect x="1249.7" y="454.5" width="3.2" height="3.2" fill="#c8d0ec"/>
<rect x="689" y="534.6" width="3.2" height="3.2" fill="#c8d0ec"/>
<rect x="738.6" y="526.8" width="3.2" height="3.2" fill="#c8d0ec"/>
<rect x="788.1" y="515.9" width="3.2" height="3.2" fill="#c8d0ec"/>
<rect x="837.7" y="506.8" width="3.2" height="3.2" fill="#c8d0ec"/>
<rect x="887.2" y="497.8" width="3.2" height="3.2" fill="#c8d0ec"/>
<rect x="936.7" y="486.8" width="3.2" height="3.2" fill="#c8d0ec"/>
<rect x="986.3" y="478.7" width="3.2" height="3.2" fill="#c8d0ec"/>
<rect x="1035.8" y="471.8" width="3.2" height="3.2" fill="#c8d0ec"/>
<rect x="1085.4" y="462.8" width="3.2" height="3.2" fill="#c8d0ec"/>
<rect x="1134.9" y="453.7" width="3.2" height="3.2" fill="#c8d0ec"/>
<rect x="1184.5" y="445.9" width="3.2" height="3.2" fill="#c8d0ec"/>
<rect x="1234" y="436.8" width="3.2" height="3.2" fill="#c8d0ec"/>
<rect x="673.3" y="518.7" width="3.2" height="3.2" fill="#c8d0ec"/>
<rect x="722.9" y="510.7" width="3.2" height="3.2" fill="#c8d0ec"/>
<rect x="772.4" y="499.5" width="3.2" height="3.2" fill="#c8d0ec"/>
<rect x="822" y="489.8" width="3.2" height="3.2" fill="#c8d0ec"/>
<rect x="871.5" y="481.7" width="3.2" height="3.2" fill="#c8d0ec"/>
<rect x="921" y="470.7" width="3.2" height="3.2" fill="#c8d0ec"/>
<rect x="970.6" y="462.7" width="3.2" height="3.2" fill="#c8d0ec"/>
<rect x="1020.1" y="455.7" width="3.2" height="3.2" fill="#c8d0ec"/>
<rect x="1069.7" y="446.7" width="3.2" height="3.2" fill="#c8d0ec"/>
<rect x="1119.2" y="437.8" width="3.2" height="3.2" fill="#c8d0ec"/>
<rect x="1168.8" y="428.7" width="3.2" height="3.2" fill="#c8d0ec"/>
<rect x="1218.3" y="418.7" width="3.2" height="3.2" fill="#c8d0ec"/>
<rect x="657.6" y="505" width="3.2" height="3.2" fill="#c8d0ec"/>
<rect x="707.2" y="496.7" width="3.2" height="3.2" fill="#c8d0ec"/>
<rect x="756.7" y="485" width="3.2" height="3.2" fill="#c8d0ec"/>
<rect x="806.3" y="474.8" width="3.2" height="3.2" fill="#c8d0ec"/>
<rect x="855.8" y="466.8" width="3.2" height="3.2" fill="#c8d0ec"/>
<rect x="905.4" y="456" width="3.2" height="3.2" fill="#c8d0ec"/>
<rect x="954.9" y="446.6" width="3.2" height="3.2" fill="#c8d0ec"/>
<rect x="1004.4" y="439.7" width="3.2" height="3.2" fill="#c8d0ec"/>
<rect x="1054" y="430.7" width="3.2" height="3.2" fill="#c8d0ec"/>
<rect x="1103.5" y="421.7" width="3.2" height="3.2" fill="#c8d0ec"/>
<rect x="1153.1" y="413.6" width="3.2" height="3.2" fill="#c8d0ec"/>
<rect x="1202.6" y="403.4" width="3.2" height="3.2" fill="#c8d0ec"/>
<rect x="641.9" y="492" width="3.2" height="3.2" fill="#c8d0ec"/>
<rect x="691.5" y="484.3" width="3.2" height="3.2" fill="#c8d0ec"/>
<rect x="741" y="469.6" width="3.2" height="3.2" fill="#c8d0ec"/>
<rect x="790.6" y="460.7" width="3.2" height="3.2" fill="#c8d0ec"/>
<rect x="840.1" y="450.1" width="3.2" height="3.2" fill="#c8d0ec"/>
<rect x="889.7" y="439.6" width="3.2" height="3.2" fill="#c8d0ec"/>
<rect x="939.2" y="430.7" width="3.2" height="3.2" fill="#c8d0ec"/>
<rect x="988.7" y="423.7" width="3.2" height="3.2" fill="#c8d0ec"/>
<rect x="1038.3" y="415.6" width="3.2" height="3.2" fill="#c8d0ec"/>
<rect x="1087.8" y="405.7" width="3.2" height="3.2" fill="#c8d0ec"/>
<rect x="1137.4" y="397.6" width="3.2" height="3.2" fill="#c8d0ec"/>
<rect x="1186.9" y="388.6" width="3.2" height="3.2" fill="#c8d0ec"/>
<rect x="626.2" y="478.7" width="3.2" height="3.2" fill="#c8d0ec"/>
<rect x="675.8" y="470.9" width="3.2" height="3.2" fill="#c8d0ec"/>
<rect x="725.3" y="455.7" width="3.2" height="3.2" fill="#c8d0ec"/>
<rect x="774.9" y="445.4" width="3.2" height="3.2" fill="#c8d0ec"/>
<rect x="824.4" y="436.5" width="3.2" height="3.2" fill="#c8d0ec"/>
<rect x="874" y="424.8" width="3.2" height="3.2" fill="#c8d0ec"/>
<rect x="923.5" y="415.5" width="3.2" height="3.2" fill="#c8d0ec"/>
<rect x="973.1" y="408.6" width="3.2" height="3.2" fill="#c8d0ec"/>
<rect x="1022.6" y="399.8" width="3.2" height="3.2" fill="#c8d0ec"/>
<rect x="1072.1" y="390.6" width="3.2" height="3.2" fill="#c8d0ec"/>
<rect x="1121.7" y="382.8" width="3.2" height="3.2" fill="#c8d0ec"/>
<rect x="1171.2" y="372.9" width="3.2" height="3.2" fill="#c8d0ec"/>
<rect x="610.5" y="465.6" width="3.2" height="3.2" fill="#c8d0ec"/>
<rect x="660.1" y="457.8" width="3.2" height="3.2" fill="#c8d0ec"/>
<rect x="709.6" y="442.2" width="3.2" height="3.2" fill="#c8d0ec"/>
<rect x="759.2" y="430.7" width="3.2" height="3.2" fill="#c8d0ec"/>
<rect x="808.7" y="421.7" width="3.2" height="3.2" fill="#c8d0ec"/>
<rect x="858.3" y="409.7" width="3.2" height="3.2" fill="#c8d0ec"/>
<rect x="907.8" y="400.6" width="3.2" height="3.2" fill="#c8d0ec"/>
<rect x="957.4" y="394.8" width="3.2" height="3.2" fill="#c8d0ec"/>
<rect x="1006.9" y="384.6" width="3.2" height="3.2" fill="#c8d0ec"/>
<rect x="1056.5" y="375.3" width="3.2" height="3.2" fill="#c8d0ec"/>
<rect x="1106" y="367.5" width="3.2" height="3.2" fill="#c8d0ec"/>
<rect x="1155.5" y="357.6" width="3.2" height="3.2" fill="#c8d0ec"/>
<rect x="594.9" y="452.9" width="3.2" height="3.2" fill="#c8d0ec"/>
<rect x="644.4" y="444.8" width="3.2" height="3.2" fill="#c8d0ec"/>
<rect x="693.9" y="428.9" width="3.2" height="3.2" fill="#c8d0ec"/>
<rect x="743.5" y="416.7" width="3.2" height="3.2" fill="#c8d0ec"/>
<rect x="793" y="406.8" width="3.2" height="3.2" fill="#c8d0ec"/>
<rect x="842.6" y="395.6" width="3.2" height="3.2" fill="#c8d0ec"/>
<rect x="892.1" y="385.9" width="3.2" height="3.2" fill="#c8d0ec"/>
<rect x="941.7" y="380.7" width="3.2" height="3.2" fill="#c8d0ec"/>
<rect x="991.2" y="369.8" width="3.2" height="3.2" fill="#c8d0ec"/>
<rect x="1040.8" y="360.7" width="3.2" height="3.2" fill="#c8d0ec"/>
<rect x="1090.3" y="352.5" width="3.2" height="3.2" fill="#c8d0ec"/>
<rect x="1139.8" y="343.9" width="3.2" height="3.2" fill="#c8d0ec"/>
<rect x="579.2" y="438.6" width="3.2" height="3.2" fill="#c8d0ec"/>
<rect x="628.7" y="430.7" width="3.2" height="3.2" fill="#c8d0ec"/>
<rect x="678.2" y="414.8" width="3.2" height="3.2" fill="#c8d0ec"/>
<rect x="727.8" y="402.6" width="3.2" height="3.2" fill="#c8d0ec"/>
<rect x="777.3" y="394" width="3.2" height="3.2" fill="#c8d0ec"/>
<rect x="826.9" y="380.7" width="3.2" height="3.2" fill="#c8d0ec"/>
<rect x="876.4" y="371.4" width="3.2" height="3.2" fill="#c8d0ec"/>
<rect x="926" y="364.3" width="3.2" height="3.2" fill="#c8d0ec"/>
<rect x="975.5" y="355" width="3.2" height="3.2" fill="#c8d0ec"/>
<rect x="1025.1" y="345.9" width="3.2" height="3.2" fill="#c8d0ec"/>
<rect x="1074.6" y="337.9" width="3.2" height="3.2" fill="#c8d0ec"/>
<rect x="1124.2" y="328.7" width="3.2" height="3.2" fill="#c8d0ec"/>
<rect x="563.5" y="425.7" width="3.2" height="3.2" fill="#c8d0ec"/>
<rect x="613" y="417.9" width="3.2" height="3.2" fill="#c8d0ec"/>
<rect x="662.5" y="399.5" width="3.2" height="3.2" fill="#c8d0ec"/>
<rect x="712.1" y="389.8" width="3.2" height="3.2" fill="#c8d0ec"/>
<rect x="761.6" y="379.5" width="3.2" height="3.2" fill="#c8d0ec"/>
<rect x="811.2" y="366.7" width="3.2" height="3.2" fill="#c8d0ec"/>
<rect x="860.7" y="356.5" width="3.2" height="3.2" fill="#c8d0ec"/>
<rect x="910.3" y="350.6" width="3.2" height="3.2" fill="#c8d0ec"/>
<rect x="959.8" y="339.7" width="3.2" height="3.2" fill="#c8d0ec"/>
<rect x="1009.4" y="331.8" width="3.2" height="3.2" fill="#c8d0ec"/>
<rect x="1058.9" y="323.7" width="3.2" height="3.2" fill="#c8d0ec"/>
<rect x="1108.5" y="314.6" width="3.2" height="3.2" fill="#c8d0ec"/>
<rect x="547.8" y="412.8" width="3.2" height="3.2" fill="#c8d0ec"/>
<rect x="597.3" y="404.8" width="3.2" height="3.2" fill="#c8d0ec"/>
<rect x="646.9" y="388.6" width="3.2" height="3.2" fill="#c8d0ec"/>
<rect x="696.4" y="376.4" width="3.2" height="3.2" fill="#c8d0ec"/>
<rect x="745.9" y="366" width="3.2" height="3.2" fill="#c8d0ec"/>
<rect x="795.5" y="352.6" width="3.2" height="3.2" fill="#c8d0ec"/>
<rect x="845" y="342.8" width="3.2" height="3.2" fill="#c8d0ec"/>
<rect x="894.6" y="334.7" width="3.2" height="3.2" fill="#c8d0ec"/>
<rect x="944.1" y="325.7" width="3.2" height="3.2" fill="#c8d0ec"/>
<rect x="993.7" y="316.7" width="3.2" height="3.2" fill="#c8d0ec"/>
<rect x="1043.2" y="308.9" width="3.2" height="3.2" fill="#c8d0ec"/>
<rect x="1092.8" y="300.7" width="3.2" height="3.2" fill="#c8d0ec"/>
<rect x="532.1" y="399.8" width="3.2" height="3.2" fill="#c8d0ec"/>
<rect x="581.6" y="391.8" width="3.2" height="3.2" fill="#c8d0ec"/>
<rect x="631.2" y="376.6" width="3.2" height="3.2" fill="#c8d0ec"/>
<rect x="680.7" y="362.8" width="3.2" height="3.2" fill="#c8d0ec"/>
<rect x="730.2" y="351.8" width="3.2" height="3.2" fill="#c8d0ec"/>
<rect x="779.8" y="338.6" width="3.2" height="3.2" fill="#c8d0ec"/>
<rect x="829.3" y="327.6" width="3.2" height="3.2" fill="#c8d0ec"/>
<rect x="878.9" y="321.7" width="3.2" height="3.2" fill="#c8d0ec"/>
<rect x="928.4" y="311.7" width="3.2" height="3.2" fill="#c8d0ec"/>
<rect x="978" y="302.9" width="3.2" height="3.2" fill="#c8d0ec"/>
<rect x="1027.5" y="295.6" width="3.2" height="3.2" fill="#c8d0ec"/>
<rect x="1077.1" y="287.3" width="3.2" height="3.2" fill="#c8d0ec"/>
<rect x="516.4" y="386.5" width="3.2" height="3.2" fill="#c8d0ec"/>
<rect x="565.9" y="378.6" width="3.2" height="3.2" fill="#c8d0ec"/>
<rect x="615.5" y="361.1" width="3.2" height="3.2" fill="#c8d0ec"/>
<rect x="665" y="349.8" width="3.2" height="3.2" fill="#c8d0ec"/>
<rect x="714.6" y="338.6" width="3.2" height="3.2" fill="#c8d0ec"/>
<rect x="764.1" y="323.2" width="3.2" height="3.2" fill="#c8d0ec"/>
<rect x="813.6" y="313.4" width="3.2" height="3.2" fill="#c8d0ec"/>
<rect x="863.2" y="305.7" width="3.2" height="3.2" fill="#c8d0ec"/>
<rect x="912.7" y="297.9" width="3.2" height="3.2" fill="#c8d0ec"/>
<rect x="962.3" y="288.3" width="3.2" height="3.2" fill="#c8d0ec"/>
<rect x="1011.8" y="281.7" width="3.2" height="3.2" fill="#c8d0ec"/>
<rect x="1061.4" y="274.3" width="3.2" height="3.2" fill="#c8d0ec"/>
<rect x="500.7" y="364.7" width="3.2" height="3.2" fill="#c8d0ec"/>
<rect x="550.2" y="356.7" width="3.2" height="3.2" fill="#c8d0ec"/>
<rect x="599.8" y="343.9" width="3.2" height="3.2" fill="#c8d0ec"/>
<rect x="649.3" y="331.6" width="3.2" height="3.2" fill="#c8d0ec"/>
<rect x="698.9" y="319.3" width="3.2" height="3.2" fill="#c8d0ec"/>
<rect x="748.4" y="302.7" width="3.2" height="3.2" fill="#c8d0ec"/>
<rect x="797.9" y="292.8" width="3.2" height="3.2" fill="#c8d0ec"/>
<rect x="847.5" y="284.7" width="3.2" height="3.2" fill="#c8d0ec"/>
<rect x="897" y="276.2" width="3.2" height="3.2" fill="#c8d0ec"/>
<rect x="946.6" y="267.8" width="3.2" height="3.2" fill="#c8d0ec"/>
<rect x="996.1" y="261.5" width="3.2" height="3.2" fill="#c8d0ec"/>
<rect x="1045.7" y="255.6" width="3.2" height="3.2" fill="#c8d0ec"/>
<rect x="485" y="343.6" width="3.2" height="3.2" fill="#c8d0ec"/>
<rect x="534.5" y="335.3" width="3.2" height="3.2" fill="#c8d0ec"/>
<rect x="584.1" y="324" width="3.2" height="3.2" fill="#c8d0ec"/>
<rect x="633.6" y="311.7" width="3.2" height="3.2" fill="#c8d0ec"/>
<rect x="683.2" y="299.8" width="3.2" height="3.2" fill="#c8d0ec"/>
<rect x="732.7" y="282.6" width="3.2" height="3.2" fill="#c8d0ec"/>
<rect x="782.3" y="272.8" width="3.2" height="3.2" fill="#c8d0ec"/>
<rect x="831.8" y="264.6" width="3.2" height="3.2" fill="#c8d0ec"/>
<rect x="881.3" y="256.4" width="3.2" height="3.2" fill="#c8d0ec"/>
<rect x="930.9" y="248.6" width="3.2" height="3.2" fill="#c8d0ec"/>
<rect x="980.4" y="242.7" width="3.2" height="3.2" fill="#c8d0ec"/>
<rect x="1030" y="235.3" width="3.2" height="3.2" fill="#c8d0ec"/>
<rect x="469.3" y="322.5" width="3.2" height="3.2" fill="#c8d0ec"/>
<rect x="518.8" y="314.5" width="3.2" height="3.2" fill="#c8d0ec"/>
<rect x="568.4" y="302.7" width="3.2" height="3.2" fill="#c8d0ec"/>
<rect x="617.9" y="290.6" width="3.2" height="3.2" fill="#c8d0ec"/>
<rect x="667.5" y="279.6" width="3.2" height="3.2" fill="#c8d0ec"/>
<rect x="717" y="262.9" width="3.2" height="3.2" fill="#c8d0ec"/>
<rect x="766.6" y="252.7" width="3.2" height="3.2" fill="#c8d0ec"/>
<rect x="816.1" y="244.7" width="3.2" height="3.2" fill="#c8d0ec"/>
<rect x="865.6" y="237.6" width="3.2" height="3.2" fill="#c8d0ec"/>
<rect x="915.2" y="230.5" width="3.2" height="3.2" fill="#c8d0ec"/>
<rect x="964.7" y="223.5" width="3.2" height="3.2" fill="#c8d0ec"/>
<rect x="1014.3" y="216.5" width="3.2" height="3.2" fill="#c8d0ec"/>
<rect x="453.6" y="300.9" width="3.2" height="3.2" fill="#c8d0ec"/>
<rect x="503.1" y="292.7" width="3.2" height="3.2" fill="#c8d0ec"/>
<rect x="552.7" y="280.4" width="3.2" height="3.2" fill="#c8d0ec"/>
<rect x="602.2" y="269.6" width="3.2" height="3.2" fill="#c8d0ec"/>
<rect x="651.8" y="259.5" width="3.2" height="3.2" fill="#c8d0ec"/>
<rect x="701.3" y="242.6" width="3.2" height="3.2" fill="#c8d0ec"/>
<rect x="750.9" y="231.6" width="3.2" height="3.2" fill="#c8d0ec"/>
<rect x="800.4" y="225" width="3.2" height="3.2" fill="#c8d0ec"/>
<rect x="850" y="218.9" width="3.2" height="3.2" fill="#c8d0ec"/>
<rect x="899.5" y="210.6" width="3.2" height="3.2" fill="#c8d0ec"/>
<rect x="949" y="203.6" width="3.2" height="3.2" fill="#c8d0ec"/>
<rect x="998.6" y="196.2" width="3.2" height="3.2" fill="#c8d0ec"/>
<rect x="437.9" y="253.6" width="3.2" height="3.2" fill="#c8d0ec"/>
<rect x="487.4" y="245.8" width="3.2" height="3.2" fill="#c8d0ec"/>
<rect x="537" y="235.6" width="3.2" height="3.2" fill="#c8d0ec"/>
<rect x="586.5" y="225.7" width="3.2" height="3.2" fill="#c8d0ec"/>
<rect x="636.1" y="216.9" width="3.2" height="3.2" fill="#c8d0ec"/>
<rect x="685.6" y="200.4" width="3.2" height="3.2" fill="#c8d0ec"/>
<rect x="735.2" y="188.6" width="3.2" height="3.2" fill="#c8d0ec"/>
<rect x="784.7" y="180.7" width="3.2" height="3.2" fill="#c8d0ec"/>
<rect x="834.3" y="177.5" width="3.2" height="3.2" fill="#c8d0ec"/>
<rect x="883.8" y="169.6" width="3.2" height="3.2" fill="#c8d0ec"/>
<rect x="933.4" y="162.6" width="3.2" height="3.2" fill="#c8d0ec"/>
<rect x="982.9" y="154.5" width="3.2" height="3.2" fill="#c8d0ec"/>
</g>
<svg class="a" style="left:0;top:0" width="1366" height="768" font-family="Liberation Mono" font-size="11" fill="#d0d0f8"><rect x="400" y="150" width="40" height="16" fill="#0000a8"/><rect x="400" y="317" width="40" height="16" fill="#0000a8"/><text x="405" y="163">48474</text><text x="405" y="330">38982</text><text x="741.9" y="663.8" text-anchor="end">0</text><text x="726.2" y="655.7" text-anchor="end">1</text><text x="710.5" y="647.6" text-anchor="end">2</text><text x="694.8" y="639.6" text-anchor="end">3</text><text x="679.1" y="631.5" text-anchor="end">4</text><text x="663.4" y="623.4" text-anchor="end">5</text><text x="647.7" y="615.3" text-anchor="end">6</text><text x="632.0" y="607.2" text-anchor="end">7</text><text x="616.3" y="599.2" text-anchor="end">8</text><text x="600.6" y="591.1" text-anchor="end">9</text><text x="585.0" y="583.0" text-anchor="end">10</text><text x="569.3" y="574.9" text-anchor="end">11</text><text x="553.6" y="566.8" text-anchor="end">12</text><text x="537.9" y="558.8" text-anchor="end">13</text><text x="522.2" y="550.7" text-anchor="end">14</text><text x="506.5" y="542.6" text-anchor="end">15</text><text x="490.8" y="534.5" text-anchor="end">16</text><text x="475.1" y="526.4" text-anchor="end">17</text><text x="459.4" y="518.4" text-anchor="end">18</text><text x="443.7" y="510.3" text-anchor="end">19</text><text x="428.0" y="502.2" text-anchor="end">20</text><text transform="matrix(0.91,0.41,-0.45,0.89,757.9,665.9)" font-size="10.5">0</text><text transform="matrix(0.91,0.41,-0.45,0.89,807.4,657.3)" font-size="10.5">1</text><text transform="matrix(0.91,0.41,-0.45,0.89,857.0,648.8)" font-size="10.5">2</text><text transform="matrix(0.91,0.41,-0.45,0.89,906.5,640.2)" font-size="10.5">3</text><text transform="matrix(0.91,0.41,-0.45,0.89,956.1,631.6)" font-size="10.5">4</text><text transform="matrix(0.91,0.41,-0.45,0.89,1005.6,623.0)" font-size="10.5">5</text><text transform="matrix(0.91,0.41,-0.45,0.89,1055.2,614.5)" font-size="10.5">6</text><text transform="matrix(0.91,0.41,-0.45,0.89,1104.7,605.9)" font-size="10.5">7</text><text transform="matrix(0.91,0.41,-0.45,0.89,1154.3,597.3)" font-size="10.5">8</text><text transform="matrix(0.91,0.41,-0.45,0.89,1203.8,588.7)" font-size="10.5">9</text><text transform="matrix(0.91,0.41,-0.45,0.89,1253.3,580.2)" font-size="10.5">10</text><text transform="matrix(0.91,0.41,-0.45,0.89,1302.9,571.6)" font-size="10.5">11</text><text transform="translate(523,580) rotate(27)" font-size="10">-  (-)</text><text transform="translate(1083,636) rotate(-10)" font-size="10">-  (-)</text><rect x="676.9" y="413.9" width="5" height="5" fill="#404000" stroke="#ffff60" stroke-width="1"/><rect x="578.3" y="561.0" width="5" height="5" fill="#404000" stroke="#ffff60" stroke-width="1"/><rect x="850.0" y="632.8" width="5" height="5" fill="#404000" stroke="#ffff60" stroke-width="1"/><rect x="437.0" y="357.2" width="5" height="5" fill="#404000" stroke="#ffff60" stroke-width="1"/><path d="M1088 648v4M1088 656v4" stroke="#e0e0f8" stroke-width="1.5"/><path d="M1088 664v38" stroke="#e0e0f8" stroke-width="1.5"/><path d="M1085 676l-10 6.5 10 6.5M1091 676l10 6.5-10 6.5" fill="none" stroke="#d8d8f4" stroke-width="2"/><path d="M1083 679l-5 3.5 5 3.5M1093 679l5 3.5-5 3.5" fill="none" stroke="#d8d8f4" stroke-width="1"/></svg>
<div class="a" style="left:675px;top:443px;width:175px;height:17px;background:#ffffe1;border:1px solid #000"></div>
<div class="t" style="left:677px;top:447px;font-size:11px;color:#000;letter-spacing:0.1px">Cursor: (X=11, Y=2), Value: 37059</div>
<div class="a" style="left:1348px;top:142px;width:18px;height:560px;background:#f0f0f0;border-left:1px solid #e8e8e8;border-right:3px solid #c8c8c8"></div>
<div class="a" style="left:1349px;top:143px;width:15px;height:16px;border:1px solid #c0c0c0;border-radius:2px;background:linear-gradient(#fafafa,#e4e4e4)"></div>
<svg class="a" style="left:1352px;top:148px" width="9" height="6" viewBox="0 0 9 6" ><path d="M1 5l3.5-3.5L8 5" fill="none" stroke="#4a6a90" stroke-width="1.6"/></svg>
<div class="a" style="left:1349px;top:570px;width:15px;height:114px;border:1px solid #a8a8a8;border-radius:2px;background:linear-gradient(90deg,#f0f0f0,#dcdcdc)"></div>
<div class="a" style="left:1353px;top:624px;width:7px;height:5px;border-top:1px solid #909090;border-bottom:1px solid #909090"></div><div class="a" style="left:1353px;top:626px;width:7px;height:1px;background:#909090"></div>
<div class="a" style="left:1349px;top:685px;width:15px;height:16px;border:1px solid #c0c0c0;border-radius:2px;background:linear-gradient(#fafafa,#e4e4e4)"></div>
<svg class="a" style="left:1352px;top:690px" width="9" height="6" viewBox="0 0 9 6" ><path d="M1 1l3.5 3.5L8 1" fill="none" stroke="#4a6a90" stroke-width="1.6"/></svg>
<div class="a" style="left:388px;top:702px;width:978px;height:16px;background:#d0d0d0"></div>
<div class="a" style="left:388px;top:702px;width:960px;height:1px;background:#ffffff"></div>
<div class="a" style="left:388px;top:702px;width:100px;height:16px;background:#a8a8a8"></div>
<svg class="a" style="left:386px;top:702px" width="104" height="16" viewBox="0 0 104 16" ><path d="M2.5 0.5l6 15h32l6-15" fill="#d0d0d0" stroke="#000"/><path d="M42.5 0.5l5 15h20l5-15" fill="#d0d0d0" stroke="#000"/><path d="M66.5 0.5l6 15h20l6-15" fill="#fff" stroke="#000"/></svg>
<div class="t" style="left:394px;top:705px;font-family:'Liberation Mono';font-size:12.5px;font-weight:bold;color:#000">Text</div>
<div class="a" style="left:395px;top:716px;width:6px;height:1px;background:#000"></div>
<div class="t" style="left:435px;top:705px;font-family:'Liberation Mono';font-size:12.5px;font-weight:bold;color:#000">2d</div>
<div class="t" style="left:461px;top:705px;font-family:'Liberation Mono';font-size:12.5px;font-weight:bold;color:#000">3d</div>
<div class="a" style="left:487px;top:703px;width:14px;height:14px;border:1px solid #c8c8c8;background:#f4f4f4"></div>
<svg class="a" style="left:490px;top:706px" width="7" height="8" viewBox="0 0 7 8" ><path d="M5 1L2 4l3 3" fill="none" stroke="#4a6a90" stroke-width="1.6"/></svg>
<div class="a" style="left:501px;top:703px;width:830px;height:14px;border:1px solid #b0b0b0;border-radius:2px;background:linear-gradient(#f0f0f0,#dcdcdc)"></div>
<div class="a" style="left:912px;top:707px;width:6px;height:6px;border-left:1px solid #909090;border-right:1px solid #909090"></div><div class="a" style="left:914px;top:707px;width:1px;height:6px;background:#909090"></div>
<div class="a" style="left:1332px;top:703px;width:15px;height:14px;border:1px solid #c8c8c8;border-radius:2px;background:linear-gradient(#fafafa,#e4e4e4)"></div>
<svg class="a" style="left:1336px;top:706px" width="7" height="8" viewBox="0 0 7 8" ><path d="M2 1l3 3-3 3" fill="none" stroke="#4a6a90" stroke-width="1.6"/></svg>
<div class="a" style="left:0;top:714px;width:388px;height:4px;background:#d6d6d6"></div>
<div class="a" style="left:0;top:718px;width:1366px;height:1px;background:#a0a0a0"></div><div class="a" style="left:0;top:719px;width:1366px;height:1px;background:#fff"></div>
<div class="a" style="left:0;top:720px;width:1366px;height:18px;background:#d6d6d6"></div>
<div class="t" style="left:2px;top:725px;font-size:11px;letter-spacing:-0.19px;color:#1a1a1a">Press F1 to receive help.</div>
<svg class="a" style="left:807px;top:723px" width="14" height="13" viewBox="0 0 14 13" ><path d="M2 1h10v2M2 1l5 5.5L2 12h10v-2" fill="none" stroke="#909090" stroke-width="1.8"/></svg>
<svg class="a" style="left:826px;top:723px" width="13" height="13" viewBox="0 0 13 13" ><circle cx="6.5" cy="6.5" r="4.5" fill="none" stroke="#909090" stroke-width="2" stroke-dasharray="2 1"/></svg>
<svg class="a" style="left:845px;top:724px" width="11" height="11" viewBox="0 0 11 11" ><path d="M4 1L1 5.5 4 10M7 1l3 4.5L7 10" fill="none" stroke="#a0a0a0"/></svg>
<div class="t" style="left:864px;top:725px;font-size:11px;letter-spacing:-0.45px;color:#1a1a1a">No CS</div>
<svg class="a" style="left:960px;top:724px" width="16" height="12" viewBox="0 0 16 12" ><path d="M1 8c2-3 5-5 8-5h5v3h-3l-2 3H4z" fill="none" stroke="#000" stroke-width="1.2"/></svg>
<div class="t" style="left:983px;top:725px;font-size:11px;letter-spacing:-0.3px;color:#1a1a1a">No OLS-Module</div>
<div class="t" style="left:1072px;top:725px;font-size:11px;letter-spacing:0.1px;color:#1a1a1a">Cursor: 7A02A =&gt; 32768 (32768) -&gt; 0 (0.00%), Width: 21</div>
<div class="a" style="left:0;top:738px;width:1366px;height:30px;background:linear-gradient(#000 0,#000 1px,#5a5a5a 1px,#505050 2px,#363636 3px,#2a2a2a 15px,#0c0c0c 15px,#141414 29px,#000 29px)"></div>
<div class="a" style="left:16px;top:739px;width:43px;height:26px;border:1px solid #4a4a4a;border-radius:3px;background:linear-gradient(#404040,#222 50%,#0c0c0c 52%,#1a1a1a)"></div>
<svg class="a" style="left:27px;top:742px" width="21" height="20" viewBox="0 0 21 20" ><path d="M2 4c3-2 5-1 8 0l-1.2 6c-3-1-5-1-8 0z" fill="#f05020"/><path d="M11 4.5c3 1 5 1 8-1l-1.2 6c-3 2-5 2-8 1z" fill="#60c030"/><path d="M0.8 11c3-1 5-1 8 0l-1.2 6c-3-1-5-1-8 0z" fill="#30a0e8"/><path d="M9.8 11.5c3 1 5 1 8-1l-1.2 6c-3 2-5 2-8 1z" fill="#f8c020"/></svg>
<svg class="a" style="left:80px;top:747px" width="17" height="14" viewBox="0 0 17 14" ><rect x="0.5" y="0.5" width="16" height="13" fill="#4a80c8" stroke="#c0d0e8"/><rect x="2" y="10" width="13" height="2" fill="#203050"/></svg>
<svg class="a" style="left:104px;top:746px" width="15" height="15" viewBox="0 0 15 15" ><circle cx="7.5" cy="7.5" r="7" fill="#e03c30"/><path d="M7.5 7.5L1.4 11a7 7 0 0 0 6.1 3.5z" fill="#20a040"/><path d="M7.5 7.5v7a7 7 0 0 0 6-3.5L11 7z" fill="#f8c818"/><path d="M1.4 11A7 7 0 0 1 2 3.5l3.5 6z" fill="#20a040"/><circle cx="7.5" cy="7.5" r="3" fill="#fff"/><circle cx="7.5" cy="7.5" r="2.2" fill="#3870d8"/></svg>
<div class="a" style="left:164px;top:741px;width:154px;height:24px;border:1px solid #444;border-radius:3px;background:linear-gradient(#2e2e2e,#1c1c1c 50%,#0e0e0e 52%,#141414)"></div>
<svg class="a" style="left:172px;top:746px" width="17" height="17" viewBox="0 0 17 17" ><circle cx="8.5" cy="8.5" r="8" fill="#d81010"/><circle cx="8.5" cy="8.5" r="5.6" fill="#fff"/><path d="M4.3 8.5c0-1.5.9-2.2 1.9-2.2s1.5.7 2.3 2.2 1.4 2.2 2.3 2.2 1.9-.7 1.9-2.2-.9-2.2-1.9-2.2-1.5.7-2.3 2.2-1.4 2.2-2.3 2.2-1.9-.7-1.9-2.2z" fill="none" stroke="#000" stroke-width="1.5"/></svg>
<div class="t" style="left:192px;top:748px;font-size:12px;letter-spacing:-0.55px;color:#dcdcdc">WinOLS - Peugeot Pa...</div>
<div class="a" style="left:1208px;top:741px;width:15px;height:24px;border:1px solid #3c3c3c;border-radius:2px;background:#181818"></div>
<svg class="a" style="left:1211px;top:747px" width="7" height="10" viewBox="0 0 7 10" ><path d="M5 1L2 5l3 4" fill="none" stroke="#e0e0e0" stroke-width="2"/></svg>
<svg class="a" style="left:1239px;top:746px" width="11" height="13" viewBox="0 0 11 13" ><path d="M5.5 1c-3 0-4 2-4 5v3L0 10.5h11L9.5 9V6c0-3-1-5-4-5z" fill="#fff"/><circle cx="5.5" cy="11.5" r="1.5" fill="#fff"/></svg>
<div class="a" style="left:1254px;top:745px;width:16px;height:15px;background:#000"></div>
<svg class="a" style="left:1255px;top:745px" width="14" height="14" viewBox="0 0 14 14" ><circle cx="7.5" cy="7.5" r="7" fill="#e03c30"/><path d="M7.5 7.5L1.4 11a7 7 0 0 0 6.1 3.5z" fill="#20a040"/><path d="M7.5 7.5v7a7 7 0 0 0 6-3.5L11 7z" fill="#f8c818"/><path d="M1.4 11A7 7 0 0 1 2 3.5l3.5 6z" fill="#20a040"/><circle cx="7.5" cy="7.5" r="3" fill="#fff"/><circle cx="7.5" cy="7.5" r="2.2" fill="#3870d8"/></svg>
<svg class="a" style="left:1273px;top:745px" width="16" height="15" viewBox="0 0 16 15" ><rect x="1" y="3" width="9" height="8" fill="#2070d0" stroke="#e0e0e0"/><path d="M3 13h5" stroke="#e0e0e0" stroke-width="2"/><path d="M11 3a4 4 0 0 1 0 5M13 1a7 7 0 0 1 0 9" fill="none" stroke="#c0c0c0"/></svg>
<svg class="a" style="left:1290px;top:745px" width="15" height="15" viewBox="0 0 15 15" ><circle cx="9" cy="3" r="2.5" fill="#40d020"/><path d="M8 5l-3 5-4-1M8 5l4 3 2-2M7 9l2 5M6 9l-3 5" stroke="#40d020" stroke-width="2.6" fill="none"/></svg>
<svg class="a" style="left:1307px;top:744px" width="16" height="16" viewBox="0 0 16 16" ><path d="M2 4c2-1 4-1 6 2l4 5-2 1-3-3-3 4-2-1 2-4z" fill="#f0f0f0"/><path d="M1 3l4-2" stroke="#e02020" stroke-width="2"/><path d="M10 14h4" stroke="#fff"/></svg>
<div class="t" style="left:1332px;top:748px;font-size:12px;letter-spacing:-0.6px;color:#d0d0d0">19:43</div>
</body></html>
